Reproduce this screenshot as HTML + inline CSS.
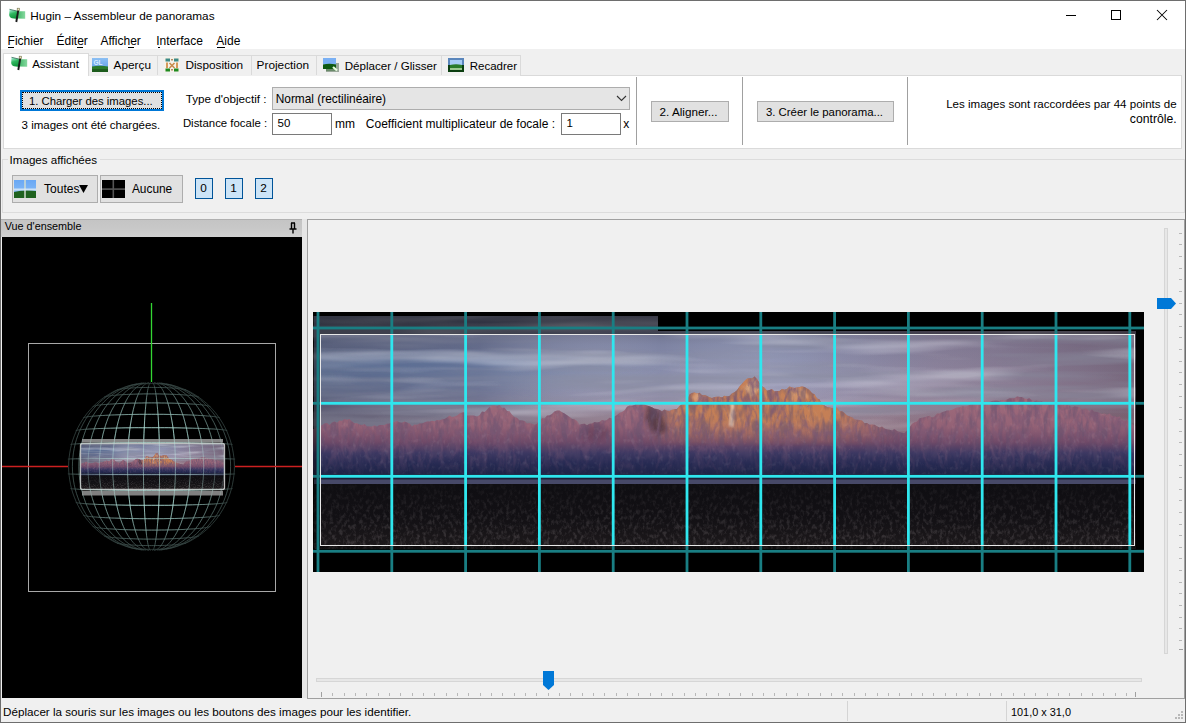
<!DOCTYPE html>
<html><head><meta charset="utf-8">
<style>
*{margin:0;padding:0;box-sizing:border-box}
html,body{width:1186px;height:723px;overflow:hidden;background:#f0f0f0;font-family:"Liberation Sans",sans-serif;font-size:12px;color:#000}
.a{position:absolute}
.t{position:absolute;white-space:nowrap;color:#000}
#win{position:absolute;left:0;top:0;width:1186px;height:723px;background:#f0f0f0;overflow:hidden}
</style></head><body>
<div id="win">
<div class="a" style="left:0px;top:0px;width:1186px;height:49px;background:#fff"></div>
<svg class="a" style="left:8px;top:7px" width="19" height="17" viewBox="0 0 19 17"><defs><linearGradient id="hg" x1="0" y1="0" x2="0.3" y2="1"><stop offset="0" stop-color="#c0f4ec"/><stop offset="0.5" stop-color="#30b860"/><stop offset="1" stop-color="#10943c"/></linearGradient><linearGradient id="hg2" x1="0" y1="0" x2="1" y2="0"><stop offset="0" stop-color="#40b868"/><stop offset="1" stop-color="#88d8a0"/></linearGradient></defs><path d="M9.5 4.3L17.2 4.3V11.8L9 11.6Z" fill="url(#hg2)"/><path d="M1.5 2.3L10 4.3L9.5 12L4 11.3Q1 10.3 1.2 7.5Z" fill="url(#hg)"/><path d="M1.5 2.3L10 4.3" stroke="#3a6a58" stroke-width="0.8"/><path d="M10.3 3L8.3 15" stroke="#1a1a1a" stroke-width="1.9"/><rect x="9.2" y="1.2" width="2.4" height="2.4" fill="#f0e8b8" stroke="#707050" stroke-width="0.6"/></svg>
<div class="t" style="left:30.30px;top:10.51px;font-size:11.80px;line-height:11.80px;">Hugin – Assembleur de panoramas</div>
<div class="a" style="left:1066px;top:15px;width:10px;height:1px;background:#000"></div>
<div class="a" style="left:1111px;top:10px;width:10px;height:10px;border:1px solid #000"></div>
<svg class="a" style="left:1156px;top:9px" width="12" height="12" viewBox="0 0 12 12"><path d="M1 1L11 11M11 1L1 11" stroke="#000" stroke-width="1.05"/></svg>
<div class="t" style="left:7.60px;top:34.84px;font-size:12.00px;line-height:12.00px;">Fichier</div>
<div class="a" style="left:8.4px;top:47px;width:6.0px;height:1px;background:#000"></div>
<div class="t" style="left:56.50px;top:34.84px;font-size:12.00px;line-height:12.00px;">Éditer</div>
<div class="a" style="left:76.5px;top:47px;width:6.5px;height:1px;background:#000"></div>
<div class="t" style="left:100.40px;top:34.84px;font-size:12.00px;line-height:12.00px;">Afficher</div>
<div class="a" style="left:127.5px;top:47px;width:6.5px;height:1px;background:#000"></div>
<div class="t" style="left:156.20px;top:34.84px;font-size:12.00px;line-height:12.00px;">Interface</div>
<div class="a" style="left:157.5px;top:47px;width:2.5px;height:1px;background:#000"></div>
<div class="t" style="left:216.30px;top:34.84px;font-size:12.00px;line-height:12.00px;">Aide</div>
<div class="a" style="left:217.1px;top:47px;width:7.5px;height:1px;background:#000"></div>
<div class="a" style="left:3px;top:75px;width:1179px;height:74px;background:#fff;border:1px solid #dadada"></div>
<div class="a" style="left:88px;top:55px;width:433px;height:21px;background:#f0f0f0;border:1px solid #dadada;border-bottom:none"></div>
<div class="a" style="left:157px;top:56px;width:1px;height:19px;background:#dadada"></div>
<div class="a" style="left:251px;top:56px;width:1px;height:19px;background:#dadada"></div>
<div class="a" style="left:316px;top:56px;width:1px;height:19px;background:#dadada"></div>
<div class="a" style="left:441px;top:56px;width:1px;height:19px;background:#dadada"></div>
<div class="a" style="left:3px;top:53px;width:86px;height:23px;background:#fff;border:1px solid #dadada;border-bottom:none"></div>
<div class="t" style="left:32.20px;top:59.07px;font-size:11.50px;line-height:11.50px;">Assistant</div>
<div class="t" style="left:113.60px;top:60.31px;font-size:11.80px;line-height:11.80px;">Aperçu</div>
<div class="t" style="left:185.40px;top:60.31px;font-size:11.80px;line-height:11.80px;">Disposition</div>
<div class="t" style="left:256.60px;top:60.31px;font-size:11.80px;line-height:11.80px;">Projection</div>
<div class="t" style="left:344.70px;top:60.48px;font-size:11.60px;line-height:11.60px;">Déplacer / Glisser</div>
<div class="t" style="left:469.70px;top:60.57px;font-size:11.50px;line-height:11.50px;">Recadrer</div>
<svg class="a" style="left:10px;top:55px" width="19" height="17" viewBox="0 0 19 17"><path d="M9.5 4.3L17.2 4.3V11.8L9 11.6Z" fill="url(#hg2)"/><path d="M1.5 2.3L10 4.3L9.5 12L4 11.3Q1 10.3 1.2 7.5Z" fill="url(#hg)"/><path d="M1.5 2.3L10 4.3" stroke="#3a6a58" stroke-width="0.8"/><path d="M10.3 3L8.3 15" stroke="#1a1a1a" stroke-width="1.9"/><rect x="9.2" y="1.2" width="2.4" height="2.4" fill="#f0e8b8" stroke="#707050" stroke-width="0.6"/></svg>
<svg class="a" style="left:92px;top:58px" width="16" height="14" viewBox="0 0 16 14"><defs><linearGradient id="glsky" x1="0" y1="0" x2="0" y2="1"><stop offset="0" stop-color="#8cc0f4"/><stop offset="1" stop-color="#5a96e0"/></linearGradient></defs><rect x="0" y="0" width="16" height="14" fill="url(#glsky)"/><path d="M0 8.5Q8 7 16 8.5V14H0Z" fill="#2a7a2a"/><rect x="0" y="11" width="16" height="3" fill="#1d5c1d"/><text x="1.5" y="6.5" font-family="Liberation Sans" font-size="6.5" font-weight="bold" fill="#d8ecff">GL</text></svg>
<svg class="a" style="left:164px;top:57px" width="16" height="15" viewBox="0 0 16 15"><rect x="0" y="0" width="16" height="15" fill="#f6f2ea"/><rect x="1.5" y="1.5" width="4.5" height="3" fill="#3c8a86"/><rect x="10" y="1.5" width="4.5" height="3" fill="#3c8a86"/><rect x="1.5" y="11.5" width="4.5" height="3" fill="#1e8a1e"/><rect x="10" y="11.5" width="4.5" height="3" fill="#1e8a1e"/><rect x="2" y="5.5" width="2" height="5.5" fill="#d49a5a"/><rect x="12" y="5.5" width="2" height="5.5" fill="#d49a5a"/><path d="M5.5 6L10.5 11M10.5 6L5.5 11" stroke="#c88a4a" stroke-width="1.6"/><rect x="7" y="2" width="2" height="1.5" fill="#b08a60"/><rect x="7" y="12" width="2" height="1.5" fill="#b08a60"/></svg>
<svg class="a" style="left:323px;top:58px" width="17" height="15" viewBox="0 0 17 15"><rect x="3" y="5" width="13" height="9" fill="#9aa89a"/><rect x="0" y="0" width="13" height="6.5" fill="#7ab0f4"/><path d="M0 6.5Q6 5 13 6.5V11H0Z" fill="#0e5a12"/><rect x="3" y="11" width="10" height="2" fill="#6a8a6a"/><path d="M10 9L14 12.5" stroke="#e8ffe0" stroke-width="2.2"/></svg>
<svg class="a" style="left:448px;top:58px" width="16" height="14" viewBox="0 0 16 14"><rect x="0" y="0" width="16" height="7" fill="#5a86bc"/><rect x="0" y="7" width="16" height="7" fill="#0b3e10"/><rect x="2" y="2" width="12" height="5" fill="#a8ccf6"/><path d="M2 7Q8 5.5 14 7V10H2Z" fill="#2a7a2a"/><rect x="2" y="10" width="12" height="2" fill="#9cc890"/></svg>
<div class="a" style="left:20px;top:90px;width:144px;height:21px;background:#e1e1e1;border:2px solid #0078d7"></div>
<div class="a" style="left:22px;top:92px;width:140px;height:17px;border:1px dotted #000"></div>
<div class="t" style="left:29.00px;top:95.63px;font-size:11.30px;line-height:11.30px;">1. Charger des images...</div>
<div class="t" style="left:21.60px;top:119.77px;font-size:11.50px;line-height:11.50px;">3 images ont été chargées.</div>
<div class="t" style="left:185.70px;top:93.10px;font-size:11.70px;line-height:11.70px;">Type d'objectif :</div>
<div class="a" style="left:272px;top:87px;width:358px;height:23px;background:#e5e5e5;border:1px solid #adadad"></div>
<div class="t" style="left:275.70px;top:93.93px;font-size:11.90px;line-height:11.90px;">Normal (rectilinéaire)</div>
<svg class="a" style="left:616px;top:95px" width="11" height="7" viewBox="0 0 11 7"><path d="M1 1L5.5 5.5L10 1" stroke="#333" stroke-width="1.1" fill="none"/></svg>
<div class="t" style="left:182.90px;top:118.35px;font-size:11.40px;line-height:11.40px;">Distance focale :</div>
<div class="a" style="left:272px;top:113px;width:60px;height:22px;background:#fff;border:1px solid #7a7a7a"></div>
<div class="t" style="left:277.50px;top:118.27px;font-size:11.50px;line-height:11.50px;">50</div>
<div class="t" style="left:335.00px;top:117.84px;font-size:12.00px;line-height:12.00px;">mm</div>
<div class="t" style="left:365.80px;top:117.84px;font-size:12.00px;line-height:12.00px;">Coefficient multiplicateur de focale :</div>
<div class="a" style="left:561px;top:113px;width:60px;height:22px;background:#fff;border:1px solid #7a7a7a"></div>
<div class="t" style="left:566.40px;top:118.27px;font-size:11.50px;line-height:11.50px;">1</div>
<div class="t" style="left:623.20px;top:117.84px;font-size:12.00px;line-height:12.00px;">x</div>
<div class="a" style="left:636px;top:77px;width:1px;height:68px;background:#a0a0a0"></div>
<div class="a" style="left:742px;top:77px;width:1px;height:68px;background:#a0a0a0"></div>
<div class="a" style="left:907px;top:77px;width:1px;height:68px;background:#a0a0a0"></div>
<div class="a" style="left:651px;top:101px;width:78px;height:21px;background:#e1e1e1;border:1px solid #adadad"></div>
<div class="t" style="left:659.60px;top:106.40px;font-size:11.70px;line-height:11.70px;">2. Aligner...</div>
<div class="a" style="left:757px;top:101px;width:137px;height:21px;background:#e1e1e1;border:1px solid #adadad"></div>
<div class="t" style="left:765.90px;top:106.65px;font-size:11.40px;line-height:11.40px;">3. Créer le panorama...</div>
<div class="t" style="left:776.60px;top:98.62px;width:400.00px;text-align:right;font-size:11.55px;line-height:11.55px;">Les images sont raccordées par 44 points de</div>
<div class="t" style="left:776.60px;top:112.67px;width:400.00px;text-align:right;font-size:12.20px;line-height:12.20px;">contrôle.</div>
<div class="a" style="left:2px;top:159px;width:1183px;height:54px;border:1px solid #dcdcdc"></div>
<div class="a" style="left:8px;top:152px;width:92px;height:13px;background:#f0f0f0"></div>
<div class="t" style="left:9.60px;top:154.18px;font-size:11.60px;line-height:11.60px;">Images affichées</div>
<div class="a" style="left:12px;top:175px;width:86px;height:28px;background:#e1e1e1;border:1px solid #adadad"></div>
<svg class="a" style="left:14px;top:180px" width="22" height="18" viewBox="0 0 22 18"><defs><linearGradient id="tsky" x1="0" y1="0" x2="0" y2="1"><stop offset="0" stop-color="#6aa8f4"/><stop offset="1" stop-color="#8cc0f8"/></linearGradient></defs><rect width="22" height="18" fill="url(#tsky)"/><path d="M0 12Q11 9 22 11V18H0Z" fill="#1f621f"/><rect x="10" y="0" width="2" height="18" fill="#d0dcd0" opacity="0.75"/><rect x="0" y="8.5" width="22" height="2" fill="#e0ecf8" opacity="0.8"/></svg>
<div class="t" style="left:44.10px;top:182.84px;font-size:12.00px;line-height:12.00px;">Toutes</div>
<svg class="a" style="left:79px;top:184.5px" width="9" height="8" viewBox="0 0 9 8"><path d="M0 0H9L4.5 8Z" fill="#000"/></svg>
<div class="a" style="left:100px;top:175px;width:83px;height:28px;background:#e1e1e1;border:1px solid #adadad"></div>
<svg class="a" style="left:102px;top:180px" width="23" height="18" viewBox="0 0 23 18"><rect width="23" height="18" fill="#000"/><rect x="10.5" y="0" width="1.6" height="18" fill="#555"/><rect x="0" y="8.3" width="23" height="1.6" fill="#555"/></svg>
<div class="t" style="left:131.90px;top:183.53px;font-size:11.90px;line-height:11.90px;">Aucune</div>
<div class="a" style="left:195px;top:178px;width:18px;height:21px;background:#cce4f7;border:1px solid #005499"></div>
<div class="t" style="left:200.20px;top:183.01px;font-size:11.80px;line-height:11.80px;">0</div>
<div class="a" style="left:225px;top:178px;width:18px;height:21px;background:#cce4f7;border:1px solid #005499"></div>
<div class="t" style="left:230.20px;top:183.01px;font-size:11.80px;line-height:11.80px;">1</div>
<div class="a" style="left:255px;top:178px;width:18px;height:21px;background:#cce4f7;border:1px solid #005499"></div>
<div class="t" style="left:260.20px;top:183.01px;font-size:11.80px;line-height:11.80px;">2</div>
<div class="a" style="left:1px;top:219px;width:301px;height:18px;background:linear-gradient(#c4c4c4,#c8c8c8 50%,#d0d0d0);border-top:1px solid #b0b0b0"></div>
<div class="t" style="left:4.80px;top:221.46px;font-size:10.80px;line-height:10.80px;">Vue d'ensemble</div>
<svg class="a" style="left:288px;top:222px" width="10" height="12" viewBox="0 0 10 12"><path d="M3 1H7M3.5 1V7M6.5 1V7M1.5 7H8.5M5 7V11.5" stroke="#000" stroke-width="1.4" fill="none"/></svg>
<div class="a" style="left:2px;top:237px;width:300px;height:461px;background:#000"></div>
<svg class="a" style="left:2px;top:237px" width="301" height="461" viewBox="2 237 301 461"><defs><radialGradient id="sfade" cx="151.5" cy="466.5" r="85" gradientUnits="userSpaceOnUse"><stop offset="0" stop-color="#fff"/><stop offset="0.5" stop-color="#d8d8d8"/><stop offset="0.8" stop-color="#777"/><stop offset="1" stop-color="#2a2a2a"/></radialGradient><mask id="smask"><rect x="2" y="237" width="301" height="461" fill="url(#sfade)"/></mask></defs><rect x="28.5" y="343.5" width="247" height="248" fill="none" stroke="#a8a8a8" stroke-width="1"/><line x1="151.5" y1="303" x2="151.5" y2="382" stroke="#33d633" stroke-width="1.3"/><line x1="2" y1="466.5" x2="68" y2="466.5" stroke="#cc2020" stroke-width="1.3"/><line x1="235" y1="466.5" x2="303" y2="466.5" stroke="#cc2020" stroke-width="1.3"/><g mask="url(#smask)" stroke="#a6dcd2" stroke-width="0.9" stroke-opacity="0.85"><polyline points="131.5,548.1 132.0,548.2 132.5,548.3 133.1,548.4 133.7,548.5 134.4,548.6 135.1,548.7 135.9,548.7 136.7,548.8 137.6,548.9 138.5,549.0 139.5,549.0 140.4,549.1 141.4,549.1 142.5,549.2 143.6,549.2 144.6,549.3 145.8,549.3 146.9,549.3 148.0,549.3 149.2,549.4 150.3,549.4 151.5,549.4 152.7,549.4 153.8,549.4 155.0,549.3 156.1,549.3 157.2,549.3 158.4,549.3 159.4,549.2 160.5,549.2 161.6,549.1 162.6,549.1 163.5,549.0 164.5,549.0 165.4,548.9 166.3,548.8 167.1,548.7 167.9,548.7 168.6,548.6 169.3,548.5 169.9,548.4 170.5,548.3 171.0,548.2 171.5,548.1" fill="none"/><polyline points="117.0,543.1 117.5,543.3 118.0,543.4 118.7,543.6 119.4,543.7 120.2,543.9 121.2,544.0 122.2,544.2 123.3,544.3 124.5,544.5 125.8,544.6 127.1,544.7 128.5,544.8 130.0,544.9 131.6,545.0 133.2,545.1 134.8,545.2 136.6,545.3 138.3,545.4 140.1,545.4 142.0,545.5 143.8,545.5 145.7,545.5 147.6,545.6 149.6,545.6 151.5,545.6 153.4,545.6 155.4,545.6 157.3,545.5 159.2,545.5 161.0,545.5 162.9,545.4 164.7,545.4 166.4,545.3 168.2,545.2 169.8,545.1 171.4,545.0 173.0,544.9 174.5,544.8 175.9,544.7 177.2,544.6 178.5,544.5 179.7,544.3 180.8,544.2 181.8,544.0 182.8,543.9 183.6,543.7 184.3,543.6 185.0,543.4 185.5,543.3 186.0,543.1" fill="none"/><polyline points="104.0,535.8 104.5,536.0 105.1,536.2 105.8,536.4 106.7,536.6 107.6,536.8 108.8,537.0 110.0,537.2 111.4,537.4 112.8,537.5 114.5,537.7 116.2,537.9 118.0,538.0 119.9,538.2 122.0,538.3 124.1,538.4 126.3,538.5 128.6,538.7 130.9,538.7 133.3,538.8 135.8,538.9 138.4,539.0 140.9,539.0 143.6,539.1 146.2,539.1 148.8,539.1 151.5,539.1 154.2,539.1 156.8,539.1 159.4,539.1 162.1,539.0 164.6,539.0 167.2,538.9 169.7,538.8 172.1,538.7 174.4,538.7 176.7,538.5 178.9,538.4 181.0,538.3 183.1,538.2 185.0,538.0 186.8,537.9 188.5,537.7 190.2,537.5 191.6,537.4 193.0,537.2 194.2,537.0 195.4,536.8 196.3,536.6 197.2,536.4 197.9,536.2 198.5,536.0 199.0,535.8" fill="none"/><polyline points="92.5,526.3 92.8,526.5 93.4,526.7 94.0,526.9 94.9,527.1 95.9,527.3 97.1,527.6 98.4,527.8 99.9,528.0 101.6,528.2 103.4,528.4 105.4,528.5 107.5,528.7 109.8,528.9 112.1,529.0 114.7,529.2 117.3,529.3 120.0,529.5 122.9,529.6 125.8,529.7 128.8,529.8 131.9,529.9 135.1,529.9 138.3,530.0 141.6,530.0 144.9,530.1 148.2,530.1 151.5,530.1 154.8,530.1 158.1,530.1 161.4,530.0 164.7,530.0 167.9,529.9 171.1,529.9 174.2,529.8 177.2,529.7 180.1,529.6 183.0,529.5 185.7,529.3 188.3,529.2 190.9,529.0 193.2,528.9 195.5,528.7 197.6,528.5 199.6,528.4 201.4,528.2 203.1,528.0 204.6,527.8 205.9,527.6 207.1,527.3 208.1,527.1 209.0,526.9 209.6,526.7 210.2,526.5 210.5,526.3" fill="none"/><polyline points="83.0,515.1 83.4,515.3 83.9,515.5 84.7,515.7 85.7,515.9 86.8,516.1 88.1,516.3 89.7,516.5 91.4,516.7 93.3,516.9 95.4,517.0 97.7,517.2 100.1,517.4 102.7,517.5 105.5,517.7 108.4,517.8 111.5,518.0 114.7,518.1 118.0,518.2 121.4,518.3 124.9,518.4 128.6,518.5 132.3,518.6 136.0,518.6 139.8,518.7 143.7,518.7 147.6,518.7 151.5,518.7 155.4,518.7 159.3,518.7 163.2,518.7 167.0,518.6 170.7,518.6 174.4,518.5 178.1,518.4 181.6,518.3 185.0,518.2 188.3,518.1 191.5,518.0 194.6,517.8 197.5,517.7 200.3,517.5 202.9,517.4 205.3,517.2 207.6,517.0 209.7,516.9 211.6,516.7 213.3,516.5 214.9,516.3 216.2,516.1 217.3,515.9 218.3,515.7 219.1,515.5 219.6,515.3 220.0,515.1" fill="none"/><polyline points="75.6,502.3 76.0,502.5 76.6,502.7 77.4,502.8 78.4,503.0 79.7,503.2 81.1,503.3 82.8,503.5 84.7,503.7 86.8,503.8 89.1,504.0 91.6,504.1 94.3,504.2 97.2,504.4 100.2,504.5 103.5,504.6 106.9,504.7 110.4,504.8 114.1,504.9 117.9,505.0 121.8,505.1 125.9,505.2 130.0,505.2 134.2,505.3 138.5,505.3 142.8,505.3 147.1,505.3 151.5,505.3 155.9,505.3 160.2,505.3 164.5,505.3 168.8,505.3 173.0,505.2 177.1,505.2 181.2,505.1 185.1,505.0 188.9,504.9 192.6,504.8 196.1,504.7 199.5,504.6 202.8,504.5 205.8,504.4 208.7,504.2 211.4,504.1 213.9,504.0 216.2,503.8 218.3,503.7 220.2,503.5 221.9,503.3 223.3,503.2 224.6,503.0 225.6,502.8 226.4,502.7 227.0,502.5 227.4,502.3" fill="none"/><polyline points="70.4,488.4 70.5,488.5 70.9,488.6 71.5,488.7 72.4,488.8 73.4,488.9 74.7,489.0 76.3,489.1 78.0,489.2 80.0,489.3 82.3,489.4 84.7,489.5 87.4,489.6 90.2,489.7 93.3,489.8 96.6,489.9 100.0,490.0 103.7,490.0 107.4,490.1 111.4,490.2 115.5,490.2 119.7,490.3 124.0,490.3 128.5,490.4 133.0,490.4 137.5,490.4 142.2,490.4 146.8,490.4 151.5,490.4 156.2,490.4 160.8,490.4 165.5,490.4 170.0,490.4 174.5,490.4 179.0,490.3 183.3,490.3 187.5,490.2 191.6,490.2 195.6,490.1 199.3,490.0 203.0,490.0 206.4,489.9 209.7,489.8 212.8,489.7 215.6,489.6 218.3,489.5 220.7,489.4 223.0,489.3 225.0,489.2 226.7,489.1 228.3,489.0 229.6,488.9 230.6,488.8 231.5,488.7 232.1,488.6 232.5,488.5 232.6,488.4" fill="none"/><polyline points="67.8,473.9 68.0,473.9 68.3,473.9 68.9,474.0 69.8,474.0 70.9,474.1 72.2,474.1 73.8,474.1 75.6,474.2 77.7,474.2 80.0,474.2 82.5,474.3 85.2,474.3 88.2,474.3 91.3,474.4 94.7,474.4 98.3,474.4 102.0,474.4 105.9,474.5 110.0,474.5 114.2,474.5 118.6,474.5 123.1,474.5 127.7,474.6 132.3,474.6 137.1,474.6 141.8,474.6 146.7,474.6 151.5,474.6 156.3,474.6 161.2,474.6 165.9,474.6 170.7,474.6 175.3,474.6 179.9,474.5 184.4,474.5 188.8,474.5 193.0,474.5 197.1,474.5 201.0,474.4 204.7,474.4 208.3,474.4 211.7,474.4 214.8,474.3 217.8,474.3 220.5,474.3 223.0,474.2 225.3,474.2 227.4,474.2 229.2,474.1 230.8,474.1 232.1,474.1 233.2,474.0 234.1,474.0 234.7,473.9 235.0,473.9 235.2,473.9" fill="none"/><polyline points="67.8,459.1 68.0,459.1 68.3,459.1 68.9,459.0 69.8,459.0 70.9,458.9 72.2,458.9 73.8,458.9 75.6,458.8 77.7,458.8 80.0,458.8 82.5,458.7 85.2,458.7 88.2,458.7 91.3,458.6 94.7,458.6 98.3,458.6 102.0,458.6 105.9,458.5 110.0,458.5 114.2,458.5 118.6,458.5 123.1,458.5 127.7,458.4 132.3,458.4 137.1,458.4 141.8,458.4 146.7,458.4 151.5,458.4 156.3,458.4 161.2,458.4 165.9,458.4 170.7,458.4 175.3,458.4 179.9,458.5 184.4,458.5 188.8,458.5 193.0,458.5 197.1,458.5 201.0,458.6 204.7,458.6 208.3,458.6 211.7,458.6 214.8,458.7 217.8,458.7 220.5,458.7 223.0,458.8 225.3,458.8 227.4,458.8 229.2,458.9 230.8,458.9 232.1,458.9 233.2,459.0 234.1,459.0 234.7,459.1 235.0,459.1 235.2,459.1" fill="none"/><polyline points="70.4,444.6 70.5,444.5 70.9,444.4 71.5,444.3 72.4,444.2 73.4,444.1 74.7,444.0 76.3,443.9 78.0,443.8 80.0,443.7 82.3,443.6 84.7,443.5 87.4,443.4 90.2,443.3 93.3,443.2 96.6,443.1 100.0,443.0 103.7,443.0 107.4,442.9 111.4,442.8 115.5,442.8 119.7,442.7 124.0,442.7 128.5,442.6 133.0,442.6 137.5,442.6 142.2,442.6 146.8,442.6 151.5,442.6 156.2,442.6 160.8,442.6 165.5,442.6 170.0,442.6 174.5,442.6 179.0,442.7 183.3,442.7 187.5,442.8 191.6,442.8 195.6,442.9 199.3,443.0 203.0,443.0 206.4,443.1 209.7,443.2 212.8,443.3 215.6,443.4 218.3,443.5 220.7,443.6 223.0,443.7 225.0,443.8 226.7,443.9 228.3,444.0 229.6,444.1 230.6,444.2 231.5,444.3 232.1,444.4 232.5,444.5 232.6,444.6" fill="none"/><polyline points="75.6,430.7 76.0,430.5 76.6,430.3 77.4,430.2 78.4,430.0 79.7,429.8 81.1,429.7 82.8,429.5 84.7,429.3 86.8,429.2 89.1,429.0 91.6,428.9 94.3,428.8 97.2,428.6 100.2,428.5 103.5,428.4 106.9,428.3 110.4,428.2 114.1,428.1 117.9,428.0 121.8,427.9 125.9,427.8 130.0,427.8 134.2,427.7 138.5,427.7 142.8,427.7 147.1,427.7 151.5,427.7 155.9,427.7 160.2,427.7 164.5,427.7 168.8,427.7 173.0,427.8 177.1,427.8 181.2,427.9 185.1,428.0 188.9,428.1 192.6,428.2 196.1,428.3 199.5,428.4 202.8,428.5 205.8,428.6 208.7,428.8 211.4,428.9 213.9,429.0 216.2,429.2 218.3,429.3 220.2,429.5 221.9,429.7 223.3,429.8 224.6,430.0 225.6,430.2 226.4,430.3 227.0,430.5 227.4,430.7" fill="none"/><polyline points="83.0,417.9 83.4,417.7 83.9,417.5 84.7,417.3 85.7,417.1 86.8,416.9 88.1,416.7 89.7,416.5 91.4,416.3 93.3,416.1 95.4,416.0 97.7,415.8 100.1,415.6 102.7,415.5 105.5,415.3 108.4,415.2 111.5,415.0 114.7,414.9 118.0,414.8 121.4,414.7 124.9,414.6 128.6,414.5 132.3,414.4 136.0,414.4 139.8,414.3 143.7,414.3 147.6,414.3 151.5,414.3 155.4,414.3 159.3,414.3 163.2,414.3 167.0,414.4 170.7,414.4 174.4,414.5 178.1,414.6 181.6,414.7 185.0,414.8 188.3,414.9 191.5,415.0 194.6,415.2 197.5,415.3 200.3,415.5 202.9,415.6 205.3,415.8 207.6,416.0 209.7,416.1 211.6,416.3 213.3,416.5 214.9,416.7 216.2,416.9 217.3,417.1 218.3,417.3 219.1,417.5 219.6,417.7 220.0,417.9" fill="none"/><polyline points="92.5,406.7 92.8,406.5 93.4,406.3 94.0,406.1 94.9,405.9 95.9,405.7 97.1,405.4 98.4,405.2 99.9,405.0 101.6,404.8 103.4,404.6 105.4,404.5 107.5,404.3 109.8,404.1 112.1,404.0 114.7,403.8 117.3,403.7 120.0,403.5 122.9,403.4 125.8,403.3 128.8,403.2 131.9,403.1 135.1,403.1 138.3,403.0 141.6,403.0 144.9,402.9 148.2,402.9 151.5,402.9 154.8,402.9 158.1,402.9 161.4,403.0 164.7,403.0 167.9,403.1 171.1,403.1 174.2,403.2 177.2,403.3 180.1,403.4 183.0,403.5 185.7,403.7 188.3,403.8 190.9,404.0 193.2,404.1 195.5,404.3 197.6,404.5 199.6,404.6 201.4,404.8 203.1,405.0 204.6,405.2 205.9,405.4 207.1,405.7 208.1,405.9 209.0,406.1 209.6,406.3 210.2,406.5 210.5,406.7" fill="none"/><polyline points="104.0,397.2 104.5,397.0 105.1,396.8 105.8,396.6 106.7,396.4 107.6,396.2 108.8,396.0 110.0,395.8 111.4,395.6 112.8,395.5 114.5,395.3 116.2,395.1 118.0,395.0 119.9,394.8 122.0,394.7 124.1,394.6 126.3,394.5 128.6,394.3 130.9,394.3 133.3,394.2 135.8,394.1 138.4,394.0 140.9,394.0 143.6,393.9 146.2,393.9 148.8,393.9 151.5,393.9 154.2,393.9 156.8,393.9 159.4,393.9 162.1,394.0 164.6,394.0 167.2,394.1 169.7,394.2 172.1,394.3 174.4,394.3 176.7,394.5 178.9,394.6 181.0,394.7 183.1,394.8 185.0,395.0 186.8,395.1 188.5,395.3 190.2,395.5 191.6,395.6 193.0,395.8 194.2,396.0 195.4,396.2 196.3,396.4 197.2,396.6 197.9,396.8 198.5,397.0 199.0,397.2" fill="none"/><polyline points="117.0,389.9 117.5,389.7 118.0,389.6 118.7,389.4 119.4,389.3 120.2,389.1 121.2,389.0 122.2,388.8 123.3,388.7 124.5,388.5 125.8,388.4 127.1,388.3 128.5,388.2 130.0,388.1 131.6,388.0 133.2,387.9 134.8,387.8 136.6,387.7 138.3,387.6 140.1,387.6 142.0,387.5 143.8,387.5 145.7,387.5 147.6,387.4 149.6,387.4 151.5,387.4 153.4,387.4 155.4,387.4 157.3,387.5 159.2,387.5 161.0,387.5 162.9,387.6 164.7,387.6 166.4,387.7 168.2,387.8 169.8,387.9 171.4,388.0 173.0,388.1 174.5,388.2 175.9,388.3 177.2,388.4 178.5,388.5 179.7,388.7 180.8,388.8 181.8,389.0 182.8,389.1 183.6,389.3 184.3,389.4 185.0,389.6 185.5,389.7 186.0,389.9" fill="none"/><polyline points="131.5,384.9 132.0,384.8 132.5,384.7 133.1,384.6 133.7,384.5 134.4,384.4 135.1,384.3 135.9,384.3 136.7,384.2 137.6,384.1 138.5,384.0 139.5,384.0 140.4,383.9 141.4,383.9 142.5,383.8 143.6,383.8 144.6,383.7 145.8,383.7 146.9,383.7 148.0,383.7 149.2,383.6 150.3,383.6 151.5,383.6 152.7,383.6 153.8,383.6 155.0,383.7 156.1,383.7 157.2,383.7 158.4,383.7 159.4,383.8 160.5,383.8 161.6,383.9 162.6,383.9 163.5,384.0 164.5,384.0 165.4,384.1 166.3,384.2 167.1,384.3 167.9,384.3 168.6,384.4 169.3,384.5 169.9,384.6 170.5,384.7 171.0,384.8 171.5,384.9" fill="none"/><polyline points="118.3,543.7 114.4,541.9 110.6,539.8 106.9,537.6 103.3,535.2 99.9,532.5 96.5,529.7 93.4,526.7 90.3,523.5 87.5,520.2 84.8,516.7 82.3,513.0 80.0,509.2 77.9,505.3 76.0,501.3 74.3,497.2 72.8,493.0 71.5,488.7 70.5,484.3 69.7,479.9 69.1,475.5 68.7,471.0 68.6,466.5 68.7,462.0 69.1,457.5 69.7,453.1 70.5,448.7 71.5,444.3 72.8,440.0 74.3,435.8 76.0,431.7 77.9,427.7 80.0,423.8 82.3,420.0 84.8,416.3 87.5,412.8 90.3,409.5 93.4,406.3 96.5,403.3 99.9,400.5 103.3,397.8 106.9,395.4 110.6,393.2 114.4,391.1 118.3,389.3" fill="none"/><polyline points="131.7,548.1 127.8,547.0 123.9,545.7 120.2,544.2 116.4,542.4 112.8,540.4 109.3,538.2 105.8,535.8 102.5,533.2 99.3,530.4 96.3,527.4 93.4,524.2 90.6,520.9 88.0,517.4 85.6,513.7 83.4,509.9 81.4,505.9 79.5,501.9 77.9,497.7 76.4,493.4 75.2,489.1 74.2,484.6 73.4,480.1 72.9,475.6 72.5,471.1 72.4,466.5 72.5,461.9 72.9,457.4 73.4,452.9 74.2,448.4 75.2,443.9 76.4,439.6 77.9,435.3 79.5,431.1 81.4,427.1 83.4,423.1 85.6,419.3 88.0,415.6 90.6,412.1 93.4,408.8 96.3,405.6 99.3,402.6 102.5,399.8 105.8,397.2 109.3,394.8 112.8,392.6 116.4,390.6 120.2,388.8 123.9,387.3 127.8,386.0 131.7,384.9" fill="none"/><polyline points="137.1,549.2 133.5,548.4 130.0,547.4 126.4,546.2 123.0,544.7 119.6,543.0 116.3,541.0 113.0,538.9 109.9,536.5 106.8,533.9 103.9,531.1 101.0,528.1 98.4,524.9 95.8,521.6 93.4,518.0 91.2,514.3 89.1,510.5 87.2,506.5 85.5,502.4 84.0,498.1 82.6,493.8 81.5,489.4 80.6,484.9 79.8,480.4 79.3,475.8 79.0,471.1 78.9,466.5 79.0,461.9 79.3,457.2 79.8,452.6 80.6,448.1 81.5,443.6 82.6,439.2 84.0,434.9 85.5,430.6 87.2,426.5 89.1,422.5 91.2,418.7 93.4,415.0 95.8,411.4 98.4,408.1 101.0,404.9 103.9,401.9 106.8,399.1 109.9,396.5 113.0,394.1 116.3,392.0 119.6,390.0 123.0,388.3 126.4,386.8 130.0,385.6 133.5,384.6 137.1,383.8" fill="none"/><polyline points="142.2,550.0 139.0,549.5 135.9,548.7 132.8,547.8 129.8,546.6 126.8,545.1 123.8,543.4 120.9,541.5 118.0,539.4 115.3,537.0 112.6,534.5 110.0,531.7 107.5,528.7 105.1,525.5 102.9,522.2 100.8,518.6 98.8,514.9 97.0,511.0 95.3,507.0 93.8,502.8 92.4,498.6 91.2,494.2 90.2,489.7 89.4,485.2 88.7,480.6 88.3,475.9 88.0,471.2 87.9,466.5 88.0,461.8 88.3,457.1 88.7,452.4 89.4,447.8 90.2,443.3 91.2,438.8 92.4,434.4 93.8,430.2 95.3,426.0 97.0,422.0 98.8,418.1 100.8,414.4 102.9,410.8 105.1,407.5 107.5,404.3 110.0,401.3 112.6,398.5 115.3,396.0 118.0,393.6 120.9,391.5 123.8,389.6 126.8,387.9 129.8,386.4 132.8,385.2 135.9,384.3 139.0,383.5 142.2,383.0" fill="none"/><polyline points="143.9,550.1 141.4,549.7 138.8,549.0 136.3,548.1 133.8,546.9 131.3,545.5 128.9,543.8 126.5,542.0 124.2,539.9 121.9,537.5 119.7,535.0 117.6,532.2 115.5,529.2 113.6,526.1 111.7,522.7 110.0,519.1 108.3,515.4 106.8,511.5 105.4,507.4 104.2,503.2 103.0,498.9 102.1,494.5 101.2,490.0 100.5,485.4 100.0,480.7 99.6,476.0 99.4,471.3 99.3,466.5 99.4,461.7 99.6,457.0 100.0,452.3 100.5,447.6 101.2,443.0 102.1,438.5 103.0,434.1 104.2,429.8 105.4,425.6 106.8,421.5 108.3,417.6 110.0,413.9 111.7,410.3 113.6,406.9 115.5,403.8 117.6,400.8 119.7,398.0 121.9,395.5 124.2,393.1 126.5,391.0 128.9,389.2 131.3,387.5 133.8,386.1 136.3,384.9 138.8,384.0 141.4,383.3 143.9,382.9" fill="none"/><polyline points="145.9,550.2 144.0,549.8 142.1,549.2 140.3,548.3 138.4,547.1 136.6,545.8 134.8,544.2 133.0,542.3 131.3,540.2 129.6,537.9 127.9,535.4 126.3,532.6 124.8,529.6 123.4,526.5 122.0,523.1 120.7,519.5 119.4,515.8 118.3,511.8 117.3,507.8 116.3,503.6 115.5,499.2 114.7,494.8 114.1,490.2 113.6,485.6 113.2,480.9 112.9,476.1 112.7,471.3 112.7,466.5 112.7,461.7 112.9,456.9 113.2,452.1 113.6,447.4 114.1,442.8 114.7,438.2 115.5,433.8 116.3,429.4 117.3,425.2 118.3,421.2 119.4,417.2 120.7,413.5 122.0,409.9 123.4,406.5 124.8,403.4 126.3,400.4 127.9,397.6 129.6,395.1 131.3,392.8 133.0,390.7 134.8,388.8 136.6,387.2 138.4,385.9 140.3,384.7 142.1,383.8 144.0,383.2 145.9,382.8" fill="none"/><polyline points="149.2,550.5 148.1,550.3 146.9,549.9 145.8,549.3 144.6,548.4 143.5,547.3 142.3,546.0 141.2,544.4 140.1,542.6 139.1,540.5 138.0,538.2 137.0,535.7 136.0,532.9 135.1,529.9 134.2,526.8 133.3,523.4 132.5,519.8 131.8,516.0 131.1,512.1 130.4,508.0 129.8,503.8 129.3,499.4 128.8,494.9 128.5,490.4 128.1,485.7 127.9,481.0 127.7,476.2 127.6,471.3 127.6,466.5 127.6,461.7 127.7,456.8 127.9,452.0 128.1,447.3 128.5,442.6 128.8,438.1 129.3,433.6 129.8,429.2 130.4,425.0 131.1,420.9 131.8,417.0 132.5,413.2 133.3,409.6 134.2,406.2 135.1,403.1 136.0,400.1 137.0,397.3 138.0,394.8 139.1,392.5 140.1,390.4 141.2,388.6 142.3,387.0 143.5,385.7 144.6,384.6 145.8,383.7 146.9,383.1 148.1,382.7 149.2,382.5" fill="none"/><polyline points="150.7,550.5 150.3,550.4 150.0,550.0 149.6,549.4 149.2,548.5 148.8,547.4 148.4,546.1 148.0,544.5 147.7,542.7 147.3,540.6 147.0,538.3 146.6,535.8 146.3,533.0 146.0,530.1 145.7,526.9 145.4,523.5 145.1,519.9 144.8,516.2 144.6,512.2 144.4,508.1 144.2,503.9 144.0,499.5 143.8,495.0 143.7,490.4 143.6,485.8 143.5,481.0 143.5,476.2 143.4,471.4 143.4,466.5 143.4,461.6 143.5,456.8 143.5,452.0 143.6,447.2 143.7,442.6 143.8,438.0 144.0,433.5 144.2,429.1 144.4,424.9 144.6,420.8 144.8,416.8 145.1,413.1 145.4,409.5 145.7,406.1 146.0,402.9 146.3,400.0 146.6,397.2 147.0,394.7 147.3,392.4 147.7,390.3 148.0,388.5 148.4,386.9 148.8,385.6 149.2,384.5 149.6,383.6 150.0,383.0 150.3,382.6 150.7,382.5" fill="none"/><polyline points="152.3,550.5 152.7,550.4 153.0,550.0 153.4,549.4 153.8,548.5 154.2,547.4 154.6,546.1 155.0,544.5 155.3,542.7 155.7,540.6 156.0,538.3 156.4,535.8 156.7,533.0 157.0,530.1 157.3,526.9 157.6,523.5 157.9,519.9 158.2,516.2 158.4,512.2 158.6,508.1 158.8,503.9 159.0,499.5 159.2,495.0 159.3,490.4 159.4,485.8 159.5,481.0 159.5,476.2 159.6,471.4 159.6,466.5 159.6,461.6 159.5,456.8 159.5,452.0 159.4,447.2 159.3,442.6 159.2,438.0 159.0,433.5 158.8,429.1 158.6,424.9 158.4,420.8 158.2,416.8 157.9,413.1 157.6,409.5 157.3,406.1 157.0,402.9 156.7,400.0 156.4,397.2 156.0,394.7 155.7,392.4 155.3,390.3 155.0,388.5 154.6,386.9 154.2,385.6 153.8,384.5 153.4,383.6 153.0,383.0 152.7,382.6 152.3,382.5" fill="none"/><polyline points="153.8,550.5 154.9,550.3 156.1,549.9 157.2,549.3 158.4,548.4 159.5,547.3 160.7,546.0 161.8,544.4 162.9,542.6 163.9,540.5 165.0,538.2 166.0,535.7 167.0,532.9 167.9,529.9 168.8,526.8 169.7,523.4 170.5,519.8 171.2,516.0 171.9,512.1 172.6,508.0 173.2,503.8 173.7,499.4 174.2,494.9 174.5,490.4 174.9,485.7 175.1,481.0 175.3,476.2 175.4,471.3 175.4,466.5 175.4,461.7 175.3,456.8 175.1,452.0 174.9,447.3 174.5,442.6 174.2,438.1 173.7,433.6 173.2,429.2 172.6,425.0 171.9,420.9 171.2,417.0 170.5,413.2 169.7,409.6 168.8,406.2 167.9,403.1 167.0,400.1 166.0,397.3 165.0,394.8 163.9,392.5 162.9,390.4 161.8,388.6 160.7,387.0 159.5,385.7 158.4,384.6 157.2,383.7 156.1,383.1 154.9,382.7 153.8,382.5" fill="none"/><polyline points="157.1,550.2 159.0,549.8 160.9,549.2 162.7,548.3 164.6,547.1 166.4,545.8 168.2,544.2 170.0,542.3 171.7,540.2 173.4,537.9 175.1,535.4 176.7,532.6 178.2,529.6 179.6,526.5 181.0,523.1 182.3,519.5 183.6,515.8 184.7,511.8 185.7,507.8 186.7,503.6 187.5,499.2 188.3,494.8 188.9,490.2 189.4,485.6 189.8,480.9 190.1,476.1 190.3,471.3 190.3,466.5 190.3,461.7 190.1,456.9 189.8,452.1 189.4,447.4 188.9,442.8 188.3,438.2 187.5,433.8 186.7,429.4 185.7,425.2 184.7,421.2 183.6,417.2 182.3,413.5 181.0,409.9 179.6,406.5 178.2,403.4 176.7,400.4 175.1,397.6 173.4,395.1 171.7,392.8 170.0,390.7 168.2,388.8 166.4,387.2 164.6,385.9 162.7,384.7 160.9,383.8 159.0,383.2 157.1,382.8" fill="none"/><polyline points="159.1,550.1 161.6,549.7 164.2,549.0 166.7,548.1 169.2,546.9 171.7,545.5 174.1,543.8 176.5,542.0 178.8,539.9 181.1,537.5 183.3,535.0 185.4,532.2 187.5,529.2 189.4,526.1 191.3,522.7 193.0,519.1 194.7,515.4 196.2,511.5 197.6,507.4 198.8,503.2 200.0,498.9 200.9,494.5 201.8,490.0 202.5,485.4 203.0,480.7 203.4,476.0 203.6,471.3 203.7,466.5 203.6,461.7 203.4,457.0 203.0,452.3 202.5,447.6 201.8,443.0 200.9,438.5 200.0,434.1 198.8,429.8 197.6,425.6 196.2,421.5 194.7,417.6 193.0,413.9 191.3,410.3 189.4,406.9 187.5,403.8 185.4,400.8 183.3,398.0 181.1,395.5 178.8,393.1 176.5,391.0 174.1,389.2 171.7,387.5 169.2,386.1 166.7,384.9 164.2,384.0 161.6,383.3 159.1,382.9" fill="none"/><polyline points="160.8,550.0 164.0,549.5 167.1,548.7 170.2,547.8 173.2,546.6 176.2,545.1 179.2,543.4 182.1,541.5 185.0,539.4 187.7,537.0 190.4,534.5 193.0,531.7 195.5,528.7 197.9,525.5 200.1,522.2 202.2,518.6 204.2,514.9 206.0,511.0 207.7,507.0 209.2,502.8 210.6,498.6 211.8,494.2 212.8,489.7 213.6,485.2 214.3,480.6 214.7,475.9 215.0,471.2 215.1,466.5 215.0,461.8 214.7,457.1 214.3,452.4 213.6,447.8 212.8,443.3 211.8,438.8 210.6,434.4 209.2,430.2 207.7,426.0 206.0,422.0 204.2,418.1 202.2,414.4 200.1,410.8 197.9,407.5 195.5,404.3 193.0,401.3 190.4,398.5 187.7,396.0 185.0,393.6 182.1,391.5 179.2,389.6 176.2,387.9 173.2,386.4 170.2,385.2 167.1,384.3 164.0,383.5 160.8,383.0" fill="none"/><polyline points="165.9,549.2 169.5,548.4 173.0,547.4 176.6,546.2 180.0,544.7 183.4,543.0 186.7,541.0 190.0,538.9 193.1,536.5 196.2,533.9 199.1,531.1 202.0,528.1 204.6,524.9 207.2,521.6 209.6,518.0 211.8,514.3 213.9,510.5 215.8,506.5 217.5,502.4 219.0,498.1 220.4,493.8 221.5,489.4 222.4,484.9 223.2,480.4 223.7,475.8 224.0,471.1 224.1,466.5 224.0,461.9 223.7,457.2 223.2,452.6 222.4,448.1 221.5,443.6 220.4,439.2 219.0,434.9 217.5,430.6 215.8,426.5 213.9,422.5 211.8,418.7 209.6,415.0 207.2,411.4 204.6,408.1 202.0,404.9 199.1,401.9 196.2,399.1 193.1,396.5 190.0,394.1 186.7,392.0 183.4,390.0 180.0,388.3 176.6,386.8 173.0,385.6 169.5,384.6 165.9,383.8" fill="none"/><polyline points="171.3,548.1 175.2,547.0 179.1,545.7 182.8,544.2 186.6,542.4 190.2,540.4 193.7,538.2 197.2,535.8 200.5,533.2 203.7,530.4 206.7,527.4 209.6,524.2 212.4,520.9 215.0,517.4 217.4,513.7 219.6,509.9 221.6,505.9 223.5,501.9 225.1,497.7 226.6,493.4 227.8,489.1 228.8,484.6 229.6,480.1 230.1,475.6 230.5,471.1 230.6,466.5 230.5,461.9 230.1,457.4 229.6,452.9 228.8,448.4 227.8,443.9 226.6,439.6 225.1,435.3 223.5,431.1 221.6,427.1 219.6,423.1 217.4,419.3 215.0,415.6 212.4,412.1 209.6,408.8 206.7,405.6 203.7,402.6 200.5,399.8 197.2,397.2 193.7,394.8 190.2,392.6 186.6,390.6 182.8,388.8 179.1,387.3 175.2,386.0 171.3,384.9" fill="none"/><polyline points="184.7,543.7 188.6,541.9 192.4,539.8 196.1,537.6 199.7,535.2 203.1,532.5 206.5,529.7 209.6,526.7 212.7,523.5 215.5,520.2 218.2,516.7 220.7,513.0 223.0,509.2 225.1,505.3 227.0,501.3 228.7,497.2 230.2,493.0 231.5,488.7 232.5,484.3 233.3,479.9 233.9,475.5 234.3,471.0 234.4,466.5 234.3,462.0 233.9,457.5 233.3,453.1 232.5,448.7 231.5,444.3 230.2,440.0 228.7,435.8 227.0,431.7 225.1,427.7 223.0,423.8 220.7,420.0 218.2,416.3 215.5,412.8 212.7,409.5 209.6,406.3 206.5,403.3 203.1,400.5 199.7,397.8 196.1,395.4 192.4,393.2 188.6,391.1 184.7,389.3" fill="none"/></g><rect x="82" y="439" width="141" height="3.5" fill="#858585"/><rect x="82" y="491" width="141" height="4.5" fill="#808080"/><svg x="81" y="444" width="143" height="45" viewBox="314 334 826 215" preserveAspectRatio="none"><use href="#photo"/></svg><rect x="80.5" y="443.5" width="144" height="46" rx="2" fill="none" stroke="#bcbcbc" stroke-width="1.3"/><g mask="url(#smask)" stroke="#b8e6de" stroke-width="1" stroke-opacity="0.55"><polyline points="131.5,548.1 132.0,548.2 132.5,548.3 133.1,548.4 133.7,548.5 134.4,548.6 135.1,548.7 135.9,548.7 136.7,548.8 137.6,548.9 138.5,549.0 139.5,549.0 140.4,549.1 141.4,549.1 142.5,549.2 143.6,549.2 144.6,549.3 145.8,549.3 146.9,549.3 148.0,549.3 149.2,549.4 150.3,549.4 151.5,549.4 152.7,549.4 153.8,549.4 155.0,549.3 156.1,549.3 157.2,549.3 158.4,549.3 159.4,549.2 160.5,549.2 161.6,549.1 162.6,549.1 163.5,549.0 164.5,549.0 165.4,548.9 166.3,548.8 167.1,548.7 167.9,548.7 168.6,548.6 169.3,548.5 169.9,548.4 170.5,548.3 171.0,548.2 171.5,548.1" fill="none"/><polyline points="117.0,543.1 117.5,543.3 118.0,543.4 118.7,543.6 119.4,543.7 120.2,543.9 121.2,544.0 122.2,544.2 123.3,544.3 124.5,544.5 125.8,544.6 127.1,544.7 128.5,544.8 130.0,544.9 131.6,545.0 133.2,545.1 134.8,545.2 136.6,545.3 138.3,545.4 140.1,545.4 142.0,545.5 143.8,545.5 145.7,545.5 147.6,545.6 149.6,545.6 151.5,545.6 153.4,545.6 155.4,545.6 157.3,545.5 159.2,545.5 161.0,545.5 162.9,545.4 164.7,545.4 166.4,545.3 168.2,545.2 169.8,545.1 171.4,545.0 173.0,544.9 174.5,544.8 175.9,544.7 177.2,544.6 178.5,544.5 179.7,544.3 180.8,544.2 181.8,544.0 182.8,543.9 183.6,543.7 184.3,543.6 185.0,543.4 185.5,543.3 186.0,543.1" fill="none"/><polyline points="104.0,535.8 104.5,536.0 105.1,536.2 105.8,536.4 106.7,536.6 107.6,536.8 108.8,537.0 110.0,537.2 111.4,537.4 112.8,537.5 114.5,537.7 116.2,537.9 118.0,538.0 119.9,538.2 122.0,538.3 124.1,538.4 126.3,538.5 128.6,538.7 130.9,538.7 133.3,538.8 135.8,538.9 138.4,539.0 140.9,539.0 143.6,539.1 146.2,539.1 148.8,539.1 151.5,539.1 154.2,539.1 156.8,539.1 159.4,539.1 162.1,539.0 164.6,539.0 167.2,538.9 169.7,538.8 172.1,538.7 174.4,538.7 176.7,538.5 178.9,538.4 181.0,538.3 183.1,538.2 185.0,538.0 186.8,537.9 188.5,537.7 190.2,537.5 191.6,537.4 193.0,537.2 194.2,537.0 195.4,536.8 196.3,536.6 197.2,536.4 197.9,536.2 198.5,536.0 199.0,535.8" fill="none"/><polyline points="92.5,526.3 92.8,526.5 93.4,526.7 94.0,526.9 94.9,527.1 95.9,527.3 97.1,527.6 98.4,527.8 99.9,528.0 101.6,528.2 103.4,528.4 105.4,528.5 107.5,528.7 109.8,528.9 112.1,529.0 114.7,529.2 117.3,529.3 120.0,529.5 122.9,529.6 125.8,529.7 128.8,529.8 131.9,529.9 135.1,529.9 138.3,530.0 141.6,530.0 144.9,530.1 148.2,530.1 151.5,530.1 154.8,530.1 158.1,530.1 161.4,530.0 164.7,530.0 167.9,529.9 171.1,529.9 174.2,529.8 177.2,529.7 180.1,529.6 183.0,529.5 185.7,529.3 188.3,529.2 190.9,529.0 193.2,528.9 195.5,528.7 197.6,528.5 199.6,528.4 201.4,528.2 203.1,528.0 204.6,527.8 205.9,527.6 207.1,527.3 208.1,527.1 209.0,526.9 209.6,526.7 210.2,526.5 210.5,526.3" fill="none"/><polyline points="83.0,515.1 83.4,515.3 83.9,515.5 84.7,515.7 85.7,515.9 86.8,516.1 88.1,516.3 89.7,516.5 91.4,516.7 93.3,516.9 95.4,517.0 97.7,517.2 100.1,517.4 102.7,517.5 105.5,517.7 108.4,517.8 111.5,518.0 114.7,518.1 118.0,518.2 121.4,518.3 124.9,518.4 128.6,518.5 132.3,518.6 136.0,518.6 139.8,518.7 143.7,518.7 147.6,518.7 151.5,518.7 155.4,518.7 159.3,518.7 163.2,518.7 167.0,518.6 170.7,518.6 174.4,518.5 178.1,518.4 181.6,518.3 185.0,518.2 188.3,518.1 191.5,518.0 194.6,517.8 197.5,517.7 200.3,517.5 202.9,517.4 205.3,517.2 207.6,517.0 209.7,516.9 211.6,516.7 213.3,516.5 214.9,516.3 216.2,516.1 217.3,515.9 218.3,515.7 219.1,515.5 219.6,515.3 220.0,515.1" fill="none"/><polyline points="75.6,502.3 76.0,502.5 76.6,502.7 77.4,502.8 78.4,503.0 79.7,503.2 81.1,503.3 82.8,503.5 84.7,503.7 86.8,503.8 89.1,504.0 91.6,504.1 94.3,504.2 97.2,504.4 100.2,504.5 103.5,504.6 106.9,504.7 110.4,504.8 114.1,504.9 117.9,505.0 121.8,505.1 125.9,505.2 130.0,505.2 134.2,505.3 138.5,505.3 142.8,505.3 147.1,505.3 151.5,505.3 155.9,505.3 160.2,505.3 164.5,505.3 168.8,505.3 173.0,505.2 177.1,505.2 181.2,505.1 185.1,505.0 188.9,504.9 192.6,504.8 196.1,504.7 199.5,504.6 202.8,504.5 205.8,504.4 208.7,504.2 211.4,504.1 213.9,504.0 216.2,503.8 218.3,503.7 220.2,503.5 221.9,503.3 223.3,503.2 224.6,503.0 225.6,502.8 226.4,502.7 227.0,502.5 227.4,502.3" fill="none"/><polyline points="70.4,488.4 70.5,488.5 70.9,488.6 71.5,488.7 72.4,488.8 73.4,488.9 74.7,489.0 76.3,489.1 78.0,489.2 80.0,489.3 82.3,489.4 84.7,489.5 87.4,489.6 90.2,489.7 93.3,489.8 96.6,489.9 100.0,490.0 103.7,490.0 107.4,490.1 111.4,490.2 115.5,490.2 119.7,490.3 124.0,490.3 128.5,490.4 133.0,490.4 137.5,490.4 142.2,490.4 146.8,490.4 151.5,490.4 156.2,490.4 160.8,490.4 165.5,490.4 170.0,490.4 174.5,490.4 179.0,490.3 183.3,490.3 187.5,490.2 191.6,490.2 195.6,490.1 199.3,490.0 203.0,490.0 206.4,489.9 209.7,489.8 212.8,489.7 215.6,489.6 218.3,489.5 220.7,489.4 223.0,489.3 225.0,489.2 226.7,489.1 228.3,489.0 229.6,488.9 230.6,488.8 231.5,488.7 232.1,488.6 232.5,488.5 232.6,488.4" fill="none"/><polyline points="67.8,473.9 68.0,473.9 68.3,473.9 68.9,474.0 69.8,474.0 70.9,474.1 72.2,474.1 73.8,474.1 75.6,474.2 77.7,474.2 80.0,474.2 82.5,474.3 85.2,474.3 88.2,474.3 91.3,474.4 94.7,474.4 98.3,474.4 102.0,474.4 105.9,474.5 110.0,474.5 114.2,474.5 118.6,474.5 123.1,474.5 127.7,474.6 132.3,474.6 137.1,474.6 141.8,474.6 146.7,474.6 151.5,474.6 156.3,474.6 161.2,474.6 165.9,474.6 170.7,474.6 175.3,474.6 179.9,474.5 184.4,474.5 188.8,474.5 193.0,474.5 197.1,474.5 201.0,474.4 204.7,474.4 208.3,474.4 211.7,474.4 214.8,474.3 217.8,474.3 220.5,474.3 223.0,474.2 225.3,474.2 227.4,474.2 229.2,474.1 230.8,474.1 232.1,474.1 233.2,474.0 234.1,474.0 234.7,473.9 235.0,473.9 235.2,473.9" fill="none"/><polyline points="67.8,459.1 68.0,459.1 68.3,459.1 68.9,459.0 69.8,459.0 70.9,458.9 72.2,458.9 73.8,458.9 75.6,458.8 77.7,458.8 80.0,458.8 82.5,458.7 85.2,458.7 88.2,458.7 91.3,458.6 94.7,458.6 98.3,458.6 102.0,458.6 105.9,458.5 110.0,458.5 114.2,458.5 118.6,458.5 123.1,458.5 127.7,458.4 132.3,458.4 137.1,458.4 141.8,458.4 146.7,458.4 151.5,458.4 156.3,458.4 161.2,458.4 165.9,458.4 170.7,458.4 175.3,458.4 179.9,458.5 184.4,458.5 188.8,458.5 193.0,458.5 197.1,458.5 201.0,458.6 204.7,458.6 208.3,458.6 211.7,458.6 214.8,458.7 217.8,458.7 220.5,458.7 223.0,458.8 225.3,458.8 227.4,458.8 229.2,458.9 230.8,458.9 232.1,458.9 233.2,459.0 234.1,459.0 234.7,459.1 235.0,459.1 235.2,459.1" fill="none"/><polyline points="70.4,444.6 70.5,444.5 70.9,444.4 71.5,444.3 72.4,444.2 73.4,444.1 74.7,444.0 76.3,443.9 78.0,443.8 80.0,443.7 82.3,443.6 84.7,443.5 87.4,443.4 90.2,443.3 93.3,443.2 96.6,443.1 100.0,443.0 103.7,443.0 107.4,442.9 111.4,442.8 115.5,442.8 119.7,442.7 124.0,442.7 128.5,442.6 133.0,442.6 137.5,442.6 142.2,442.6 146.8,442.6 151.5,442.6 156.2,442.6 160.8,442.6 165.5,442.6 170.0,442.6 174.5,442.6 179.0,442.7 183.3,442.7 187.5,442.8 191.6,442.8 195.6,442.9 199.3,443.0 203.0,443.0 206.4,443.1 209.7,443.2 212.8,443.3 215.6,443.4 218.3,443.5 220.7,443.6 223.0,443.7 225.0,443.8 226.7,443.9 228.3,444.0 229.6,444.1 230.6,444.2 231.5,444.3 232.1,444.4 232.5,444.5 232.6,444.6" fill="none"/><polyline points="75.6,430.7 76.0,430.5 76.6,430.3 77.4,430.2 78.4,430.0 79.7,429.8 81.1,429.7 82.8,429.5 84.7,429.3 86.8,429.2 89.1,429.0 91.6,428.9 94.3,428.8 97.2,428.6 100.2,428.5 103.5,428.4 106.9,428.3 110.4,428.2 114.1,428.1 117.9,428.0 121.8,427.9 125.9,427.8 130.0,427.8 134.2,427.7 138.5,427.7 142.8,427.7 147.1,427.7 151.5,427.7 155.9,427.7 160.2,427.7 164.5,427.7 168.8,427.7 173.0,427.8 177.1,427.8 181.2,427.9 185.1,428.0 188.9,428.1 192.6,428.2 196.1,428.3 199.5,428.4 202.8,428.5 205.8,428.6 208.7,428.8 211.4,428.9 213.9,429.0 216.2,429.2 218.3,429.3 220.2,429.5 221.9,429.7 223.3,429.8 224.6,430.0 225.6,430.2 226.4,430.3 227.0,430.5 227.4,430.7" fill="none"/><polyline points="83.0,417.9 83.4,417.7 83.9,417.5 84.7,417.3 85.7,417.1 86.8,416.9 88.1,416.7 89.7,416.5 91.4,416.3 93.3,416.1 95.4,416.0 97.7,415.8 100.1,415.6 102.7,415.5 105.5,415.3 108.4,415.2 111.5,415.0 114.7,414.9 118.0,414.8 121.4,414.7 124.9,414.6 128.6,414.5 132.3,414.4 136.0,414.4 139.8,414.3 143.7,414.3 147.6,414.3 151.5,414.3 155.4,414.3 159.3,414.3 163.2,414.3 167.0,414.4 170.7,414.4 174.4,414.5 178.1,414.6 181.6,414.7 185.0,414.8 188.3,414.9 191.5,415.0 194.6,415.2 197.5,415.3 200.3,415.5 202.9,415.6 205.3,415.8 207.6,416.0 209.7,416.1 211.6,416.3 213.3,416.5 214.9,416.7 216.2,416.9 217.3,417.1 218.3,417.3 219.1,417.5 219.6,417.7 220.0,417.9" fill="none"/><polyline points="92.5,406.7 92.8,406.5 93.4,406.3 94.0,406.1 94.9,405.9 95.9,405.7 97.1,405.4 98.4,405.2 99.9,405.0 101.6,404.8 103.4,404.6 105.4,404.5 107.5,404.3 109.8,404.1 112.1,404.0 114.7,403.8 117.3,403.7 120.0,403.5 122.9,403.4 125.8,403.3 128.8,403.2 131.9,403.1 135.1,403.1 138.3,403.0 141.6,403.0 144.9,402.9 148.2,402.9 151.5,402.9 154.8,402.9 158.1,402.9 161.4,403.0 164.7,403.0 167.9,403.1 171.1,403.1 174.2,403.2 177.2,403.3 180.1,403.4 183.0,403.5 185.7,403.7 188.3,403.8 190.9,404.0 193.2,404.1 195.5,404.3 197.6,404.5 199.6,404.6 201.4,404.8 203.1,405.0 204.6,405.2 205.9,405.4 207.1,405.7 208.1,405.9 209.0,406.1 209.6,406.3 210.2,406.5 210.5,406.7" fill="none"/><polyline points="104.0,397.2 104.5,397.0 105.1,396.8 105.8,396.6 106.7,396.4 107.6,396.2 108.8,396.0 110.0,395.8 111.4,395.6 112.8,395.5 114.5,395.3 116.2,395.1 118.0,395.0 119.9,394.8 122.0,394.7 124.1,394.6 126.3,394.5 128.6,394.3 130.9,394.3 133.3,394.2 135.8,394.1 138.4,394.0 140.9,394.0 143.6,393.9 146.2,393.9 148.8,393.9 151.5,393.9 154.2,393.9 156.8,393.9 159.4,393.9 162.1,394.0 164.6,394.0 167.2,394.1 169.7,394.2 172.1,394.3 174.4,394.3 176.7,394.5 178.9,394.6 181.0,394.7 183.1,394.8 185.0,395.0 186.8,395.1 188.5,395.3 190.2,395.5 191.6,395.6 193.0,395.8 194.2,396.0 195.4,396.2 196.3,396.4 197.2,396.6 197.9,396.8 198.5,397.0 199.0,397.2" fill="none"/><polyline points="117.0,389.9 117.5,389.7 118.0,389.6 118.7,389.4 119.4,389.3 120.2,389.1 121.2,389.0 122.2,388.8 123.3,388.7 124.5,388.5 125.8,388.4 127.1,388.3 128.5,388.2 130.0,388.1 131.6,388.0 133.2,387.9 134.8,387.8 136.6,387.7 138.3,387.6 140.1,387.6 142.0,387.5 143.8,387.5 145.7,387.5 147.6,387.4 149.6,387.4 151.5,387.4 153.4,387.4 155.4,387.4 157.3,387.5 159.2,387.5 161.0,387.5 162.9,387.6 164.7,387.6 166.4,387.7 168.2,387.8 169.8,387.9 171.4,388.0 173.0,388.1 174.5,388.2 175.9,388.3 177.2,388.4 178.5,388.5 179.7,388.7 180.8,388.8 181.8,389.0 182.8,389.1 183.6,389.3 184.3,389.4 185.0,389.6 185.5,389.7 186.0,389.9" fill="none"/><polyline points="131.5,384.9 132.0,384.8 132.5,384.7 133.1,384.6 133.7,384.5 134.4,384.4 135.1,384.3 135.9,384.3 136.7,384.2 137.6,384.1 138.5,384.0 139.5,384.0 140.4,383.9 141.4,383.9 142.5,383.8 143.6,383.8 144.6,383.7 145.8,383.7 146.9,383.7 148.0,383.7 149.2,383.6 150.3,383.6 151.5,383.6 152.7,383.6 153.8,383.6 155.0,383.7 156.1,383.7 157.2,383.7 158.4,383.7 159.4,383.8 160.5,383.8 161.6,383.9 162.6,383.9 163.5,384.0 164.5,384.0 165.4,384.1 166.3,384.2 167.1,384.3 167.9,384.3 168.6,384.4 169.3,384.5 169.9,384.6 170.5,384.7 171.0,384.8 171.5,384.9" fill="none"/><polyline points="118.3,543.7 114.4,541.9 110.6,539.8 106.9,537.6 103.3,535.2 99.9,532.5 96.5,529.7 93.4,526.7 90.3,523.5 87.5,520.2 84.8,516.7 82.3,513.0 80.0,509.2 77.9,505.3 76.0,501.3 74.3,497.2 72.8,493.0 71.5,488.7 70.5,484.3 69.7,479.9 69.1,475.5 68.7,471.0 68.6,466.5 68.7,462.0 69.1,457.5 69.7,453.1 70.5,448.7 71.5,444.3 72.8,440.0 74.3,435.8 76.0,431.7 77.9,427.7 80.0,423.8 82.3,420.0 84.8,416.3 87.5,412.8 90.3,409.5 93.4,406.3 96.5,403.3 99.9,400.5 103.3,397.8 106.9,395.4 110.6,393.2 114.4,391.1 118.3,389.3" fill="none"/><polyline points="131.7,548.1 127.8,547.0 123.9,545.7 120.2,544.2 116.4,542.4 112.8,540.4 109.3,538.2 105.8,535.8 102.5,533.2 99.3,530.4 96.3,527.4 93.4,524.2 90.6,520.9 88.0,517.4 85.6,513.7 83.4,509.9 81.4,505.9 79.5,501.9 77.9,497.7 76.4,493.4 75.2,489.1 74.2,484.6 73.4,480.1 72.9,475.6 72.5,471.1 72.4,466.5 72.5,461.9 72.9,457.4 73.4,452.9 74.2,448.4 75.2,443.9 76.4,439.6 77.9,435.3 79.5,431.1 81.4,427.1 83.4,423.1 85.6,419.3 88.0,415.6 90.6,412.1 93.4,408.8 96.3,405.6 99.3,402.6 102.5,399.8 105.8,397.2 109.3,394.8 112.8,392.6 116.4,390.6 120.2,388.8 123.9,387.3 127.8,386.0 131.7,384.9" fill="none"/><polyline points="137.1,549.2 133.5,548.4 130.0,547.4 126.4,546.2 123.0,544.7 119.6,543.0 116.3,541.0 113.0,538.9 109.9,536.5 106.8,533.9 103.9,531.1 101.0,528.1 98.4,524.9 95.8,521.6 93.4,518.0 91.2,514.3 89.1,510.5 87.2,506.5 85.5,502.4 84.0,498.1 82.6,493.8 81.5,489.4 80.6,484.9 79.8,480.4 79.3,475.8 79.0,471.1 78.9,466.5 79.0,461.9 79.3,457.2 79.8,452.6 80.6,448.1 81.5,443.6 82.6,439.2 84.0,434.9 85.5,430.6 87.2,426.5 89.1,422.5 91.2,418.7 93.4,415.0 95.8,411.4 98.4,408.1 101.0,404.9 103.9,401.9 106.8,399.1 109.9,396.5 113.0,394.1 116.3,392.0 119.6,390.0 123.0,388.3 126.4,386.8 130.0,385.6 133.5,384.6 137.1,383.8" fill="none"/><polyline points="142.2,550.0 139.0,549.5 135.9,548.7 132.8,547.8 129.8,546.6 126.8,545.1 123.8,543.4 120.9,541.5 118.0,539.4 115.3,537.0 112.6,534.5 110.0,531.7 107.5,528.7 105.1,525.5 102.9,522.2 100.8,518.6 98.8,514.9 97.0,511.0 95.3,507.0 93.8,502.8 92.4,498.6 91.2,494.2 90.2,489.7 89.4,485.2 88.7,480.6 88.3,475.9 88.0,471.2 87.9,466.5 88.0,461.8 88.3,457.1 88.7,452.4 89.4,447.8 90.2,443.3 91.2,438.8 92.4,434.4 93.8,430.2 95.3,426.0 97.0,422.0 98.8,418.1 100.8,414.4 102.9,410.8 105.1,407.5 107.5,404.3 110.0,401.3 112.6,398.5 115.3,396.0 118.0,393.6 120.9,391.5 123.8,389.6 126.8,387.9 129.8,386.4 132.8,385.2 135.9,384.3 139.0,383.5 142.2,383.0" fill="none"/><polyline points="143.9,550.1 141.4,549.7 138.8,549.0 136.3,548.1 133.8,546.9 131.3,545.5 128.9,543.8 126.5,542.0 124.2,539.9 121.9,537.5 119.7,535.0 117.6,532.2 115.5,529.2 113.6,526.1 111.7,522.7 110.0,519.1 108.3,515.4 106.8,511.5 105.4,507.4 104.2,503.2 103.0,498.9 102.1,494.5 101.2,490.0 100.5,485.4 100.0,480.7 99.6,476.0 99.4,471.3 99.3,466.5 99.4,461.7 99.6,457.0 100.0,452.3 100.5,447.6 101.2,443.0 102.1,438.5 103.0,434.1 104.2,429.8 105.4,425.6 106.8,421.5 108.3,417.6 110.0,413.9 111.7,410.3 113.6,406.9 115.5,403.8 117.6,400.8 119.7,398.0 121.9,395.5 124.2,393.1 126.5,391.0 128.9,389.2 131.3,387.5 133.8,386.1 136.3,384.9 138.8,384.0 141.4,383.3 143.9,382.9" fill="none"/><polyline points="145.9,550.2 144.0,549.8 142.1,549.2 140.3,548.3 138.4,547.1 136.6,545.8 134.8,544.2 133.0,542.3 131.3,540.2 129.6,537.9 127.9,535.4 126.3,532.6 124.8,529.6 123.4,526.5 122.0,523.1 120.7,519.5 119.4,515.8 118.3,511.8 117.3,507.8 116.3,503.6 115.5,499.2 114.7,494.8 114.1,490.2 113.6,485.6 113.2,480.9 112.9,476.1 112.7,471.3 112.7,466.5 112.7,461.7 112.9,456.9 113.2,452.1 113.6,447.4 114.1,442.8 114.7,438.2 115.5,433.8 116.3,429.4 117.3,425.2 118.3,421.2 119.4,417.2 120.7,413.5 122.0,409.9 123.4,406.5 124.8,403.4 126.3,400.4 127.9,397.6 129.6,395.1 131.3,392.8 133.0,390.7 134.8,388.8 136.6,387.2 138.4,385.9 140.3,384.7 142.1,383.8 144.0,383.2 145.9,382.8" fill="none"/><polyline points="149.2,550.5 148.1,550.3 146.9,549.9 145.8,549.3 144.6,548.4 143.5,547.3 142.3,546.0 141.2,544.4 140.1,542.6 139.1,540.5 138.0,538.2 137.0,535.7 136.0,532.9 135.1,529.9 134.2,526.8 133.3,523.4 132.5,519.8 131.8,516.0 131.1,512.1 130.4,508.0 129.8,503.8 129.3,499.4 128.8,494.9 128.5,490.4 128.1,485.7 127.9,481.0 127.7,476.2 127.6,471.3 127.6,466.5 127.6,461.7 127.7,456.8 127.9,452.0 128.1,447.3 128.5,442.6 128.8,438.1 129.3,433.6 129.8,429.2 130.4,425.0 131.1,420.9 131.8,417.0 132.5,413.2 133.3,409.6 134.2,406.2 135.1,403.1 136.0,400.1 137.0,397.3 138.0,394.8 139.1,392.5 140.1,390.4 141.2,388.6 142.3,387.0 143.5,385.7 144.6,384.6 145.8,383.7 146.9,383.1 148.1,382.7 149.2,382.5" fill="none"/><polyline points="150.7,550.5 150.3,550.4 150.0,550.0 149.6,549.4 149.2,548.5 148.8,547.4 148.4,546.1 148.0,544.5 147.7,542.7 147.3,540.6 147.0,538.3 146.6,535.8 146.3,533.0 146.0,530.1 145.7,526.9 145.4,523.5 145.1,519.9 144.8,516.2 144.6,512.2 144.4,508.1 144.2,503.9 144.0,499.5 143.8,495.0 143.7,490.4 143.6,485.8 143.5,481.0 143.5,476.2 143.4,471.4 143.4,466.5 143.4,461.6 143.5,456.8 143.5,452.0 143.6,447.2 143.7,442.6 143.8,438.0 144.0,433.5 144.2,429.1 144.4,424.9 144.6,420.8 144.8,416.8 145.1,413.1 145.4,409.5 145.7,406.1 146.0,402.9 146.3,400.0 146.6,397.2 147.0,394.7 147.3,392.4 147.7,390.3 148.0,388.5 148.4,386.9 148.8,385.6 149.2,384.5 149.6,383.6 150.0,383.0 150.3,382.6 150.7,382.5" fill="none"/><polyline points="152.3,550.5 152.7,550.4 153.0,550.0 153.4,549.4 153.8,548.5 154.2,547.4 154.6,546.1 155.0,544.5 155.3,542.7 155.7,540.6 156.0,538.3 156.4,535.8 156.7,533.0 157.0,530.1 157.3,526.9 157.6,523.5 157.9,519.9 158.2,516.2 158.4,512.2 158.6,508.1 158.8,503.9 159.0,499.5 159.2,495.0 159.3,490.4 159.4,485.8 159.5,481.0 159.5,476.2 159.6,471.4 159.6,466.5 159.6,461.6 159.5,456.8 159.5,452.0 159.4,447.2 159.3,442.6 159.2,438.0 159.0,433.5 158.8,429.1 158.6,424.9 158.4,420.8 158.2,416.8 157.9,413.1 157.6,409.5 157.3,406.1 157.0,402.9 156.7,400.0 156.4,397.2 156.0,394.7 155.7,392.4 155.3,390.3 155.0,388.5 154.6,386.9 154.2,385.6 153.8,384.5 153.4,383.6 153.0,383.0 152.7,382.6 152.3,382.5" fill="none"/><polyline points="153.8,550.5 154.9,550.3 156.1,549.9 157.2,549.3 158.4,548.4 159.5,547.3 160.7,546.0 161.8,544.4 162.9,542.6 163.9,540.5 165.0,538.2 166.0,535.7 167.0,532.9 167.9,529.9 168.8,526.8 169.7,523.4 170.5,519.8 171.2,516.0 171.9,512.1 172.6,508.0 173.2,503.8 173.7,499.4 174.2,494.9 174.5,490.4 174.9,485.7 175.1,481.0 175.3,476.2 175.4,471.3 175.4,466.5 175.4,461.7 175.3,456.8 175.1,452.0 174.9,447.3 174.5,442.6 174.2,438.1 173.7,433.6 173.2,429.2 172.6,425.0 171.9,420.9 171.2,417.0 170.5,413.2 169.7,409.6 168.8,406.2 167.9,403.1 167.0,400.1 166.0,397.3 165.0,394.8 163.9,392.5 162.9,390.4 161.8,388.6 160.7,387.0 159.5,385.7 158.4,384.6 157.2,383.7 156.1,383.1 154.9,382.7 153.8,382.5" fill="none"/><polyline points="157.1,550.2 159.0,549.8 160.9,549.2 162.7,548.3 164.6,547.1 166.4,545.8 168.2,544.2 170.0,542.3 171.7,540.2 173.4,537.9 175.1,535.4 176.7,532.6 178.2,529.6 179.6,526.5 181.0,523.1 182.3,519.5 183.6,515.8 184.7,511.8 185.7,507.8 186.7,503.6 187.5,499.2 188.3,494.8 188.9,490.2 189.4,485.6 189.8,480.9 190.1,476.1 190.3,471.3 190.3,466.5 190.3,461.7 190.1,456.9 189.8,452.1 189.4,447.4 188.9,442.8 188.3,438.2 187.5,433.8 186.7,429.4 185.7,425.2 184.7,421.2 183.6,417.2 182.3,413.5 181.0,409.9 179.6,406.5 178.2,403.4 176.7,400.4 175.1,397.6 173.4,395.1 171.7,392.8 170.0,390.7 168.2,388.8 166.4,387.2 164.6,385.9 162.7,384.7 160.9,383.8 159.0,383.2 157.1,382.8" fill="none"/><polyline points="159.1,550.1 161.6,549.7 164.2,549.0 166.7,548.1 169.2,546.9 171.7,545.5 174.1,543.8 176.5,542.0 178.8,539.9 181.1,537.5 183.3,535.0 185.4,532.2 187.5,529.2 189.4,526.1 191.3,522.7 193.0,519.1 194.7,515.4 196.2,511.5 197.6,507.4 198.8,503.2 200.0,498.9 200.9,494.5 201.8,490.0 202.5,485.4 203.0,480.7 203.4,476.0 203.6,471.3 203.7,466.5 203.6,461.7 203.4,457.0 203.0,452.3 202.5,447.6 201.8,443.0 200.9,438.5 200.0,434.1 198.8,429.8 197.6,425.6 196.2,421.5 194.7,417.6 193.0,413.9 191.3,410.3 189.4,406.9 187.5,403.8 185.4,400.8 183.3,398.0 181.1,395.5 178.8,393.1 176.5,391.0 174.1,389.2 171.7,387.5 169.2,386.1 166.7,384.9 164.2,384.0 161.6,383.3 159.1,382.9" fill="none"/><polyline points="160.8,550.0 164.0,549.5 167.1,548.7 170.2,547.8 173.2,546.6 176.2,545.1 179.2,543.4 182.1,541.5 185.0,539.4 187.7,537.0 190.4,534.5 193.0,531.7 195.5,528.7 197.9,525.5 200.1,522.2 202.2,518.6 204.2,514.9 206.0,511.0 207.7,507.0 209.2,502.8 210.6,498.6 211.8,494.2 212.8,489.7 213.6,485.2 214.3,480.6 214.7,475.9 215.0,471.2 215.1,466.5 215.0,461.8 214.7,457.1 214.3,452.4 213.6,447.8 212.8,443.3 211.8,438.8 210.6,434.4 209.2,430.2 207.7,426.0 206.0,422.0 204.2,418.1 202.2,414.4 200.1,410.8 197.9,407.5 195.5,404.3 193.0,401.3 190.4,398.5 187.7,396.0 185.0,393.6 182.1,391.5 179.2,389.6 176.2,387.9 173.2,386.4 170.2,385.2 167.1,384.3 164.0,383.5 160.8,383.0" fill="none"/><polyline points="165.9,549.2 169.5,548.4 173.0,547.4 176.6,546.2 180.0,544.7 183.4,543.0 186.7,541.0 190.0,538.9 193.1,536.5 196.2,533.9 199.1,531.1 202.0,528.1 204.6,524.9 207.2,521.6 209.6,518.0 211.8,514.3 213.9,510.5 215.8,506.5 217.5,502.4 219.0,498.1 220.4,493.8 221.5,489.4 222.4,484.9 223.2,480.4 223.7,475.8 224.0,471.1 224.1,466.5 224.0,461.9 223.7,457.2 223.2,452.6 222.4,448.1 221.5,443.6 220.4,439.2 219.0,434.9 217.5,430.6 215.8,426.5 213.9,422.5 211.8,418.7 209.6,415.0 207.2,411.4 204.6,408.1 202.0,404.9 199.1,401.9 196.2,399.1 193.1,396.5 190.0,394.1 186.7,392.0 183.4,390.0 180.0,388.3 176.6,386.8 173.0,385.6 169.5,384.6 165.9,383.8" fill="none"/><polyline points="171.3,548.1 175.2,547.0 179.1,545.7 182.8,544.2 186.6,542.4 190.2,540.4 193.7,538.2 197.2,535.8 200.5,533.2 203.7,530.4 206.7,527.4 209.6,524.2 212.4,520.9 215.0,517.4 217.4,513.7 219.6,509.9 221.6,505.9 223.5,501.9 225.1,497.7 226.6,493.4 227.8,489.1 228.8,484.6 229.6,480.1 230.1,475.6 230.5,471.1 230.6,466.5 230.5,461.9 230.1,457.4 229.6,452.9 228.8,448.4 227.8,443.9 226.6,439.6 225.1,435.3 223.5,431.1 221.6,427.1 219.6,423.1 217.4,419.3 215.0,415.6 212.4,412.1 209.6,408.8 206.7,405.6 203.7,402.6 200.5,399.8 197.2,397.2 193.7,394.8 190.2,392.6 186.6,390.6 182.8,388.8 179.1,387.3 175.2,386.0 171.3,384.9" fill="none"/><polyline points="184.7,543.7 188.6,541.9 192.4,539.8 196.1,537.6 199.7,535.2 203.1,532.5 206.5,529.7 209.6,526.7 212.7,523.5 215.5,520.2 218.2,516.7 220.7,513.0 223.0,509.2 225.1,505.3 227.0,501.3 228.7,497.2 230.2,493.0 231.5,488.7 232.5,484.3 233.3,479.9 233.9,475.5 234.3,471.0 234.4,466.5 234.3,462.0 233.9,457.5 233.3,453.1 232.5,448.7 231.5,444.3 230.2,440.0 228.7,435.8 227.0,431.7 225.1,427.7 223.0,423.8 220.7,420.0 218.2,416.3 215.5,412.8 212.7,409.5 209.6,406.3 206.5,403.3 203.1,400.5 199.7,397.8 196.1,395.4 192.4,393.2 188.6,391.1 184.7,389.3" fill="none"/></g></svg>
<div class="a" style="left:302px;top:219px;width:5px;height:479px;background:#e6e6e6"></div>
<div class="a" style="left:307px;top:219px;width:878px;height:480px;background:#f0f0f0;border:1px solid #a0a0a0"></div>
<svg class="a" style="left:313px;top:312px" width="831" height="260" viewBox="313 312 831 260"><rect x="313" y="312" width="831" height="260" fill="#000"/><g id="photo"><defs><linearGradient id="skyv" x1="0" y1="316" x2="0" y2="432" gradientUnits="userSpaceOnUse"><stop offset="0" stop-color="#5e5f78"/><stop offset="0.25" stop-color="#7a80a0"/><stop offset="0.55" stop-color="#8e90ae"/><stop offset="0.72" stop-color="#928ca6"/><stop offset="0.86" stop-color="#8e7a8c"/><stop offset="1" stop-color="#8a6e7a"/></linearGradient><linearGradient id="skyh" x1="314" y1="0" x2="1140" y2="0" gradientUnits="userSpaceOnUse"><stop offset="0" stop-color="#2c3650" stop-opacity="0.55"/><stop offset="0.2" stop-color="#34405e" stop-opacity="0.35"/><stop offset="0.42" stop-color="#ffffff" stop-opacity="0.02"/><stop offset="0.55" stop-color="#d8dcf0" stop-opacity="0.18"/><stop offset="0.72" stop-color="#b0a0b8" stop-opacity="0.08"/><stop offset="0.88" stop-color="#6a5060" stop-opacity="0.22"/><stop offset="1" stop-color="#503848" stop-opacity="0.38"/></linearGradient><linearGradient id="skyb" x1="0" y1="316" x2="0" y2="432" gradientUnits="userSpaceOnUse"><stop offset="0" stop-color="#000" stop-opacity="0"/><stop offset="0.28" stop-color="#5a7eb0" stop-opacity="0"/><stop offset="0.4" stop-color="#5a7eb0" stop-opacity="0.45"/><stop offset="0.62" stop-color="#5a7eb0" stop-opacity="0.2"/><stop offset="0.8" stop-color="#5a7eb0" stop-opacity="0"/></linearGradient><linearGradient id="skybm" x1="314" y1="0" x2="700" y2="0" gradientUnits="userSpaceOnUse"><stop offset="0" stop-color="#fff"/><stop offset="0.5" stop-color="#aaa"/><stop offset="1" stop-color="#000"/></linearGradient><mask id="skybmask"><rect x="314" y="316" width="400" height="120" fill="url(#skybm)"/></mask><linearGradient id="mt" x1="0" y1="376" x2="0" y2="476" gradientUnits="userSpaceOnUse"><stop offset="0" stop-color="#a87480"/><stop offset="0.5" stop-color="#946276"/><stop offset="0.66" stop-color="#704a68"/><stop offset="0.77" stop-color="#3c3862"/><stop offset="0.88" stop-color="#262a52"/><stop offset="1" stop-color="#1c2244"/></linearGradient><linearGradient id="orx" x1="640" y1="0" x2="900" y2="0" gradientUnits="userSpaceOnUse"><stop offset="0" stop-color="#cc8450" stop-opacity="0"/><stop offset="0.18" stop-color="#cc8450" stop-opacity="0.8"/><stop offset="0.72" stop-color="#cc8450" stop-opacity="0.85"/><stop offset="1" stop-color="#cc8450" stop-opacity="0"/></linearGradient><linearGradient id="ory" x1="0" y1="376" x2="0" y2="470" gradientUnits="userSpaceOnUse"><stop offset="0" stop-color="#fff"/><stop offset="0.45" stop-color="#fff"/><stop offset="0.75" stop-color="#000"/></linearGradient><mask id="orm"><rect x="312" y="370" width="830" height="110" fill="url(#ory)"/></mask><linearGradient id="fld" x1="0" y1="484" x2="0" y2="550" gradientUnits="userSpaceOnUse"><stop offset="0" stop-color="#0f0e12"/><stop offset="0.5" stop-color="#121014"/><stop offset="1" stop-color="#1e1a1c"/></linearGradient><filter id="streak" x="312" y="316" width="830" height="115" filterUnits="userSpaceOnUse"><feTurbulence type="fractalNoise" baseFrequency="0.004 0.07" numOctaves="3" seed="4"/><feColorMatrix type="matrix" values="0 0 0 0 0.25  0 0 0 0 0.26  0 0 0 0 0.34  3.2 0 0 0 -1.35"/></filter><filter id="streakL" x="312" y="316" width="830" height="115" filterUnits="userSpaceOnUse"><feTurbulence type="fractalNoise" baseFrequency="0.005 0.06" numOctaves="3" seed="11"/><feColorMatrix type="matrix" values="0 0 0 0 0.85  0 0 0 0 0.86  0 0 0 0 0.92  3.0 0 0 0 -1.45"/></filter><filter id="rock" x="312" y="370" width="830" height="110" filterUnits="userSpaceOnUse"><feTurbulence type="fractalNoise" baseFrequency="0.16 0.05" numOctaves="3" seed="2"/><feColorMatrix type="matrix" values="0 0 0 0 0.12  0 0 0 0 0.08  0 0 0 0 0.16  3.5 0 0 0 -1.45"/></filter><filter id="rockL" x="312" y="370" width="830" height="110" filterUnits="userSpaceOnUse"><feTurbulence type="fractalNoise" baseFrequency="0.25 0.18" numOctaves="2" seed="8"/><feColorMatrix type="matrix" values="0 0 0 0 0.95  0 0 0 0 0.82  0 0 0 0 0.8  3.0 0 0 0 -1.6"/></filter><filter id="brush" x="312" y="484" width="830" height="66" filterUnits="userSpaceOnUse"><feTurbulence type="fractalNoise" baseFrequency="0.3 0.2" numOctaves="3" seed="5"/><feColorMatrix type="matrix" values="0 0 0 0 0.45  0 0 0 0 0.4  0 0 0 0 0.42  3.2 0 0 0 -1.45"/></filter><linearGradient id="brm" x1="0" y1="484" x2="0" y2="550" gradientUnits="userSpaceOnUse"><stop offset="0" stop-color="#222"/><stop offset="0.4" stop-color="#666"/><stop offset="1" stop-color="#bbb"/></linearGradient><mask id="brmask"><rect x="312" y="484" width="830" height="66" fill="url(#brm)"/></mask><filter id="crev" x="312" y="370" width="830" height="110" filterUnits="userSpaceOnUse"><feTurbulence type="turbulence" baseFrequency="0.07 0.03" numOctaves="3" seed="21"/><feColorMatrix type="matrix" values="0 0 0 0 0.2  0 0 0 0 0.1  0 0 0 0 0.18  -5 0 0 0 1.35"/></filter><linearGradient id="crm" x1="0" y1="376" x2="0" y2="470" gradientUnits="userSpaceOnUse"><stop offset="0" stop-color="#fff"/><stop offset="0.6" stop-color="#bbb"/><stop offset="1" stop-color="#222"/></linearGradient><mask id="crmask"><rect x="312" y="370" width="830" height="110" fill="url(#crm)"/></mask><linearGradient id="rkm" x1="0" y1="376" x2="0" y2="476" gradientUnits="userSpaceOnUse"><stop offset="0" stop-color="#fff"/><stop offset="0.6" stop-color="#fff"/><stop offset="0.85" stop-color="#555"/><stop offset="1" stop-color="#111"/></linearGradient><mask id="rkmask"><rect x="312" y="370" width="830" height="110" fill="url(#rkm)"/></mask><linearGradient id="warm" x1="800" y1="0" x2="1140" y2="0" gradientUnits="userSpaceOnUse"><stop offset="0" stop-color="#8a6a78" stop-opacity="0"/><stop offset="0.4" stop-color="#8a6a78" stop-opacity="0.3"/><stop offset="1" stop-color="#7a5a68" stop-opacity="0.35"/></linearGradient><filter id="soft" x="-1" y="-1" width="3" height="3"><feGaussianBlur stdDeviation="2.5"/></filter><filter id="soft1" x="-1" y="-1" width="3" height="3"><feGaussianBlur stdDeviation="0.9"/></filter><clipPath id="mclip"><polygon points="312.0,429.3 314.5,428.9 317.0,427.2 319.5,426.5 322.0,425.3 324.5,423.6 327.0,423.1 329.5,424.9 332.0,422.6 334.5,421.6 337.0,422.7 339.5,420.5 342.0,420.7 344.5,419.1 347.0,419.8 349.5,419.0 352.0,421.4 354.5,423.2 357.0,423.3 359.5,424.5 362.0,424.9 364.5,424.0 367.0,426.4 369.5,426.6 372.0,426.5 374.5,425.2 377.0,426.7 379.5,425.1 382.0,425.1 384.5,424.9 387.0,423.8 389.5,423.7 392.0,421.7 394.5,422.2 397.0,421.0 399.5,422.6 402.0,422.8 404.5,421.5 407.0,422.4 409.5,423.4 412.0,426.2 414.5,424.5 417.0,424.7 419.5,423.5 422.0,423.4 424.5,422.4 427.0,421.5 429.5,421.4 432.0,420.8 434.5,421.2 437.0,420.1 439.5,420.2 442.0,419.4 444.5,419.0 447.0,417.4 449.5,415.6 452.0,416.9 454.5,416.4 457.0,415.4 459.5,413.4 462.0,412.6 464.5,412.5 467.0,415.4 469.5,415.6 472.0,415.6 474.5,415.7 477.0,416.6 479.5,415.3 482.0,411.4 484.5,412.0 487.0,409.8 489.5,407.1 492.0,405.5 494.5,405.4 497.0,406.2 499.5,405.1 502.0,407.8 504.5,407.7 507.0,410.9 509.5,411.3 512.0,414.7 514.5,417.0 517.0,417.7 519.5,420.6 522.0,420.5 524.5,421.0 527.0,423.4 529.5,422.9 532.0,423.7 534.5,424.7 537.0,423.7 539.5,420.5 542.0,418.3 544.5,418.6 547.0,415.5 549.5,415.5 552.0,414.0 554.5,411.4 557.0,410.6 559.5,410.4 562.0,412.2 564.5,413.6 567.0,415.2 569.5,417.0 572.0,419.1 574.5,419.3 577.0,421.0 579.5,424.8 582.0,423.9 584.5,423.8 587.0,425.3 589.5,423.8 592.0,423.6 594.5,421.9 597.0,422.5 599.5,422.1 602.0,419.9 604.5,420.7 607.0,420.0 609.5,417.7 612.0,418.5 614.5,416.5 617.0,415.3 619.5,412.7 622.0,411.9 624.5,410.3 627.0,406.8 629.5,405.5 632.0,405.7 634.5,405.0 637.0,401.7 639.5,402.3 642.0,403.8 644.5,404.2 647.0,405.4 649.5,406.3 652.0,407.3 654.5,408.8 657.0,409.0 659.5,410.1 662.0,411.6 664.5,409.5 667.0,410.7 669.5,411.0 672.0,409.7 674.5,409.2 677.0,409.1 679.5,406.0 682.0,404.2 684.5,403.2 687.0,400.2 689.5,394.5 692.0,393.0 694.5,392.6 697.0,393.5 699.5,392.7 702.0,395.3 704.5,395.0 707.0,396.1 709.5,397.2 712.0,398.0 714.5,397.1 717.0,396.8 719.5,396.7 722.0,397.4 724.5,395.7 727.0,396.6 729.5,395.9 732.0,393.4 734.5,392.2 737.0,390.3 739.5,386.6 742.0,383.8 744.5,380.9 747.0,378.7 749.5,378.0 752.0,378.5 754.5,376.4 757.0,378.9 759.5,383.2 762.0,386.2 764.5,387.8 767.0,390.8 769.5,390.0 772.0,389.3 774.5,391.5 777.0,391.0 779.5,391.0 782.0,389.0 784.5,389.7 787.0,389.0 789.5,386.5 792.0,387.6 794.5,387.9 797.0,387.4 799.5,387.0 802.0,386.5 804.5,387.0 807.0,388.5 809.5,390.0 812.0,393.2 814.5,394.2 817.0,398.4 819.5,399.4 822.0,404.6 824.5,405.5 827.0,406.9 829.5,407.6 832.0,408.3 834.5,408.3 837.0,407.8 839.5,411.2 842.0,411.2 844.5,413.0 847.0,415.4 849.5,416.6 852.0,417.3 854.5,419.6 857.0,419.7 859.5,419.9 862.0,420.6 864.5,423.2 867.0,423.1 869.5,424.8 872.0,424.6 874.5,424.7 877.0,426.2 879.5,427.5 882.0,426.4 884.5,428.6 887.0,429.6 889.5,429.8 892.0,430.5 894.5,428.9 897.0,431.1 899.5,432.3 902.0,432.7 904.5,432.9 907.0,430.4 909.5,427.6 912.0,423.8 914.5,422.3 917.0,421.4 919.5,418.3 922.0,417.7 924.5,417.2 927.0,416.5 929.5,415.8 932.0,417.5 934.5,416.4 937.0,413.4 939.5,413.6 942.0,412.2 944.5,411.4 947.0,410.6 949.5,410.5 952.0,409.7 954.5,408.5 957.0,407.4 959.5,407.2 962.0,406.0 964.5,406.5 967.0,406.3 969.5,404.9 972.0,403.6 974.5,403.3 977.0,403.3 979.5,403.4 982.0,403.3 984.5,401.8 987.0,402.6 989.5,401.9 992.0,401.1 994.5,400.7 997.0,400.8 999.5,401.1 1002.0,400.1 1004.5,400.6 1007.0,399.4 1009.5,398.2 1012.0,398.3 1014.5,398.3 1017.0,396.4 1019.5,397.0 1022.0,397.0 1024.5,398.5 1027.0,399.0 1029.5,398.2 1032.0,400.5 1034.5,401.2 1037.0,400.6 1039.5,401.6 1042.0,401.2 1044.5,403.5 1047.0,403.5 1049.5,404.4 1052.0,404.4 1054.5,404.4 1057.0,404.9 1059.5,404.7 1062.0,403.8 1064.5,405.6 1067.0,404.7 1069.5,405.7 1072.0,407.8 1074.5,406.3 1077.0,406.7 1079.5,407.1 1082.0,409.7 1084.5,408.5 1087.0,408.8 1089.5,411.2 1092.0,409.6 1094.5,411.8 1097.0,412.0 1099.5,413.0 1102.0,413.9 1104.5,413.6 1107.0,414.8 1109.5,413.4 1112.0,416.0 1114.5,416.0 1117.0,417.3 1119.5,416.6 1122.0,419.4 1124.5,420.9 1127.0,419.9 1129.5,421.8 1132.0,423.7 1134.5,425.9 1137.0,426.0 1139.5,427.5 1142.0,429.3 1142.0,476.0 312.0,476.0"/></clipPath></defs><rect x="314" y="316" width="826" height="160" fill="url(#skyv)"/><rect x="314" y="316" width="826" height="160" fill="url(#skyh)"/><rect x="314" y="316" width="400" height="120" fill="url(#skyb)" mask="url(#skybmask)"/><rect x="800" y="316" width="340" height="120" fill="url(#warm)"/><rect x="314" y="316" width="826" height="115" filter="url(#streak)" opacity="0.55"/><rect x="314" y="316" width="826" height="115" filter="url(#streakL)" opacity="0.35"/><polygon points="312.0,429.3 314.5,428.9 317.0,427.2 319.5,426.5 322.0,425.3 324.5,423.6 327.0,423.1 329.5,424.9 332.0,422.6 334.5,421.6 337.0,422.7 339.5,420.5 342.0,420.7 344.5,419.1 347.0,419.8 349.5,419.0 352.0,421.4 354.5,423.2 357.0,423.3 359.5,424.5 362.0,424.9 364.5,424.0 367.0,426.4 369.5,426.6 372.0,426.5 374.5,425.2 377.0,426.7 379.5,425.1 382.0,425.1 384.5,424.9 387.0,423.8 389.5,423.7 392.0,421.7 394.5,422.2 397.0,421.0 399.5,422.6 402.0,422.8 404.5,421.5 407.0,422.4 409.5,423.4 412.0,426.2 414.5,424.5 417.0,424.7 419.5,423.5 422.0,423.4 424.5,422.4 427.0,421.5 429.5,421.4 432.0,420.8 434.5,421.2 437.0,420.1 439.5,420.2 442.0,419.4 444.5,419.0 447.0,417.4 449.5,415.6 452.0,416.9 454.5,416.4 457.0,415.4 459.5,413.4 462.0,412.6 464.5,412.5 467.0,415.4 469.5,415.6 472.0,415.6 474.5,415.7 477.0,416.6 479.5,415.3 482.0,411.4 484.5,412.0 487.0,409.8 489.5,407.1 492.0,405.5 494.5,405.4 497.0,406.2 499.5,405.1 502.0,407.8 504.5,407.7 507.0,410.9 509.5,411.3 512.0,414.7 514.5,417.0 517.0,417.7 519.5,420.6 522.0,420.5 524.5,421.0 527.0,423.4 529.5,422.9 532.0,423.7 534.5,424.7 537.0,423.7 539.5,420.5 542.0,418.3 544.5,418.6 547.0,415.5 549.5,415.5 552.0,414.0 554.5,411.4 557.0,410.6 559.5,410.4 562.0,412.2 564.5,413.6 567.0,415.2 569.5,417.0 572.0,419.1 574.5,419.3 577.0,421.0 579.5,424.8 582.0,423.9 584.5,423.8 587.0,425.3 589.5,423.8 592.0,423.6 594.5,421.9 597.0,422.5 599.5,422.1 602.0,419.9 604.5,420.7 607.0,420.0 609.5,417.7 612.0,418.5 614.5,416.5 617.0,415.3 619.5,412.7 622.0,411.9 624.5,410.3 627.0,406.8 629.5,405.5 632.0,405.7 634.5,405.0 637.0,401.7 639.5,402.3 642.0,403.8 644.5,404.2 647.0,405.4 649.5,406.3 652.0,407.3 654.5,408.8 657.0,409.0 659.5,410.1 662.0,411.6 664.5,409.5 667.0,410.7 669.5,411.0 672.0,409.7 674.5,409.2 677.0,409.1 679.5,406.0 682.0,404.2 684.5,403.2 687.0,400.2 689.5,394.5 692.0,393.0 694.5,392.6 697.0,393.5 699.5,392.7 702.0,395.3 704.5,395.0 707.0,396.1 709.5,397.2 712.0,398.0 714.5,397.1 717.0,396.8 719.5,396.7 722.0,397.4 724.5,395.7 727.0,396.6 729.5,395.9 732.0,393.4 734.5,392.2 737.0,390.3 739.5,386.6 742.0,383.8 744.5,380.9 747.0,378.7 749.5,378.0 752.0,378.5 754.5,376.4 757.0,378.9 759.5,383.2 762.0,386.2 764.5,387.8 767.0,390.8 769.5,390.0 772.0,389.3 774.5,391.5 777.0,391.0 779.5,391.0 782.0,389.0 784.5,389.7 787.0,389.0 789.5,386.5 792.0,387.6 794.5,387.9 797.0,387.4 799.5,387.0 802.0,386.5 804.5,387.0 807.0,388.5 809.5,390.0 812.0,393.2 814.5,394.2 817.0,398.4 819.5,399.4 822.0,404.6 824.5,405.5 827.0,406.9 829.5,407.6 832.0,408.3 834.5,408.3 837.0,407.8 839.5,411.2 842.0,411.2 844.5,413.0 847.0,415.4 849.5,416.6 852.0,417.3 854.5,419.6 857.0,419.7 859.5,419.9 862.0,420.6 864.5,423.2 867.0,423.1 869.5,424.8 872.0,424.6 874.5,424.7 877.0,426.2 879.5,427.5 882.0,426.4 884.5,428.6 887.0,429.6 889.5,429.8 892.0,430.5 894.5,428.9 897.0,431.1 899.5,432.3 902.0,432.7 904.5,432.9 907.0,430.4 909.5,427.6 912.0,423.8 914.5,422.3 917.0,421.4 919.5,418.3 922.0,417.7 924.5,417.2 927.0,416.5 929.5,415.8 932.0,417.5 934.5,416.4 937.0,413.4 939.5,413.6 942.0,412.2 944.5,411.4 947.0,410.6 949.5,410.5 952.0,409.7 954.5,408.5 957.0,407.4 959.5,407.2 962.0,406.0 964.5,406.5 967.0,406.3 969.5,404.9 972.0,403.6 974.5,403.3 977.0,403.3 979.5,403.4 982.0,403.3 984.5,401.8 987.0,402.6 989.5,401.9 992.0,401.1 994.5,400.7 997.0,400.8 999.5,401.1 1002.0,400.1 1004.5,400.6 1007.0,399.4 1009.5,398.2 1012.0,398.3 1014.5,398.3 1017.0,396.4 1019.5,397.0 1022.0,397.0 1024.5,398.5 1027.0,399.0 1029.5,398.2 1032.0,400.5 1034.5,401.2 1037.0,400.6 1039.5,401.6 1042.0,401.2 1044.5,403.5 1047.0,403.5 1049.5,404.4 1052.0,404.4 1054.5,404.4 1057.0,404.9 1059.5,404.7 1062.0,403.8 1064.5,405.6 1067.0,404.7 1069.5,405.7 1072.0,407.8 1074.5,406.3 1077.0,406.7 1079.5,407.1 1082.0,409.7 1084.5,408.5 1087.0,408.8 1089.5,411.2 1092.0,409.6 1094.5,411.8 1097.0,412.0 1099.5,413.0 1102.0,413.9 1104.5,413.6 1107.0,414.8 1109.5,413.4 1112.0,416.0 1114.5,416.0 1117.0,417.3 1119.5,416.6 1122.0,419.4 1124.5,420.9 1127.0,419.9 1129.5,421.8 1132.0,423.7 1134.5,425.9 1137.0,426.0 1139.5,427.5 1142.0,429.3 1142.0,476.0 312.0,476.0" fill="url(#mt)"/><g clip-path="url(#mclip)"><rect x="640" y="370" width="260" height="110" fill="url(#orx)" mask="url(#orm)"/><path d="M648 404L660 410L668 430L655 436L645 420Z" fill="#2e2030" opacity="0.6" filter="url(#soft)"/><ellipse cx="595" cy="432" rx="14" ry="8" fill="#4a2c44" opacity="0.35" filter="url(#soft)"/><polygon points="731,403 734.5,404 733.5,427 729,426" fill="#f0dcc8" opacity="0.7" filter="url(#soft1)"/><polygon points="754,377 761,387 752,398 744,388" fill="#f4d0a8" opacity="0.45" filter="url(#soft1)"/><polygon points="697,392 703,397 698,404 692,398" fill="#f0c8a8" opacity="0.4" filter="url(#soft1)"/><polygon points="785,386 803,388 810,398 790,402" fill="#e8b890" opacity="0.3" filter="url(#soft1)"/><rect x="312" y="370" width="830" height="110" filter="url(#rock)" mask="url(#rkmask)" opacity="0.5"/><rect x="312" y="370" width="830" height="110" filter="url(#crev)" mask="url(#crmask)" opacity="0.75"/><rect x="312" y="370" width="830" height="70" filter="url(#rockL)" opacity="0.08"/></g><rect x="314" y="474" width="826" height="12" fill="#1c2038"/><rect x="314" y="479.5" width="826" height="4.5" fill="#4c4e6e" opacity="0.9"/><rect x="314" y="484" width="826" height="66" fill="url(#fld)"/><rect x="314" y="485" width="826" height="65" filter="url(#brush)" mask="url(#brmask)" opacity="0.3"/></g><rect x="658" y="311" width="487" height="20" fill="#000"/><rect x="1136" y="311" width="9" height="262" fill="#000"/><rect x="313" y="549" width="832" height="24" fill="#000"/><rect x="316.6" y="312" width="2.8" height="260" fill="#2fe6ee"/><rect x="390.4" y="312" width="2.8" height="260" fill="#2fe6ee"/><rect x="464.2" y="312" width="2.8" height="260" fill="#2fe6ee"/><rect x="538.0" y="312" width="2.8" height="260" fill="#2fe6ee"/><rect x="611.8" y="312" width="2.8" height="260" fill="#2fe6ee"/><rect x="685.6" y="312" width="2.8" height="260" fill="#2fe6ee"/><rect x="759.4" y="312" width="2.8" height="260" fill="#2fe6ee"/><rect x="833.2" y="312" width="2.8" height="260" fill="#2fe6ee"/><rect x="907.0" y="312" width="2.8" height="260" fill="#2fe6ee"/><rect x="980.8" y="312" width="2.8" height="260" fill="#2fe6ee"/><rect x="1054.6" y="312" width="2.8" height="260" fill="#2fe6ee"/><rect x="1128.4" y="312" width="2.8" height="260" fill="#2fe6ee"/><rect x="313" y="326.6" width="831" height="2.8" fill="#2fe6ee"/><rect x="313" y="401.9" width="831" height="2.8" fill="#2fe6ee"/><rect x="313" y="474.9" width="831" height="2.8" fill="#2fe6ee"/><rect x="313" y="549.9" width="831" height="2.8" fill="#2fe6ee"/><path fill="#000" fill-opacity="0.45" fill-rule="evenodd" d="M313 311H1145V573H313Z M320 334H1135V546H320Z"/><rect x="320.5" y="334.5" width="814" height="211" fill="none" stroke="#e8e8e8" stroke-width="1"/></svg>
<div class="a" style="left:316px;top:678px;width:826px;height:4px;background:#e7e7e7;border:1px solid #d6d6d6"></div><div class="a" style="left:1164px;top:228px;width:4px;height:426px;background:#e7e7e7;border:1px solid #d6d6d6"></div><svg class="a" style="left:0;top:0" width="1186" height="723"><rect x="332.0" y="693" width="1" height="3" fill="#b8b8b8"/><rect x="344.0" y="693" width="1" height="3" fill="#b8b8b8"/><rect x="355.0" y="693" width="1" height="3" fill="#b8b8b8"/><rect x="366.0" y="693" width="1" height="3" fill="#b8b8b8"/><rect x="378.0" y="693" width="1" height="3" fill="#b8b8b8"/><rect x="389.0" y="693" width="1" height="3" fill="#b8b8b8"/><rect x="400.0" y="693" width="1" height="3" fill="#b8b8b8"/><rect x="412.0" y="693" width="1" height="3" fill="#b8b8b8"/><rect x="423.0" y="693" width="1" height="3" fill="#b8b8b8"/><rect x="434.0" y="693" width="1" height="3" fill="#b8b8b8"/><rect x="446.0" y="693" width="1" height="3" fill="#b8b8b8"/><rect x="457.0" y="693" width="1" height="3" fill="#b8b8b8"/><rect x="468.0" y="693" width="1" height="3" fill="#b8b8b8"/><rect x="480.0" y="693" width="1" height="3" fill="#b8b8b8"/><rect x="491.0" y="693" width="1" height="3" fill="#b8b8b8"/><rect x="502.0" y="693" width="1" height="3" fill="#b8b8b8"/><rect x="514.0" y="693" width="1" height="3" fill="#b8b8b8"/><rect x="525.0" y="693" width="1" height="3" fill="#b8b8b8"/><rect x="536.0" y="693" width="1" height="3" fill="#b8b8b8"/><rect x="548.0" y="693" width="1" height="3" fill="#b8b8b8"/><rect x="559.0" y="693" width="1" height="3" fill="#b8b8b8"/><rect x="570.0" y="693" width="1" height="3" fill="#b8b8b8"/><rect x="582.0" y="693" width="1" height="3" fill="#b8b8b8"/><rect x="593.0" y="693" width="1" height="3" fill="#b8b8b8"/><rect x="604.0" y="693" width="1" height="3" fill="#b8b8b8"/><rect x="616.0" y="693" width="1" height="3" fill="#b8b8b8"/><rect x="627.0" y="693" width="1" height="3" fill="#b8b8b8"/><rect x="638.0" y="693" width="1" height="3" fill="#b8b8b8"/><rect x="650.0" y="693" width="1" height="3" fill="#b8b8b8"/><rect x="661.0" y="693" width="1" height="3" fill="#b8b8b8"/><rect x="672.0" y="693" width="1" height="3" fill="#b8b8b8"/><rect x="684.0" y="693" width="1" height="3" fill="#b8b8b8"/><rect x="695.0" y="693" width="1" height="3" fill="#b8b8b8"/><rect x="706.0" y="693" width="1" height="3" fill="#b8b8b8"/><rect x="718.0" y="693" width="1" height="3" fill="#b8b8b8"/><rect x="729.0" y="693" width="1" height="3" fill="#b8b8b8"/><rect x="740.0" y="693" width="1" height="3" fill="#b8b8b8"/><rect x="752.0" y="693" width="1" height="3" fill="#b8b8b8"/><rect x="763.0" y="693" width="1" height="3" fill="#b8b8b8"/><rect x="774.0" y="693" width="1" height="3" fill="#b8b8b8"/><rect x="786.0" y="693" width="1" height="3" fill="#b8b8b8"/><rect x="797.0" y="693" width="1" height="3" fill="#b8b8b8"/><rect x="808.0" y="693" width="1" height="3" fill="#b8b8b8"/><rect x="820.0" y="693" width="1" height="3" fill="#b8b8b8"/><rect x="831.0" y="693" width="1" height="3" fill="#b8b8b8"/><rect x="842.0" y="693" width="1" height="3" fill="#b8b8b8"/><rect x="854.0" y="693" width="1" height="3" fill="#b8b8b8"/><rect x="865.0" y="693" width="1" height="3" fill="#b8b8b8"/><rect x="877.0" y="693" width="1" height="3" fill="#b8b8b8"/><rect x="888.0" y="693" width="1" height="3" fill="#b8b8b8"/><rect x="899.0" y="693" width="1" height="3" fill="#b8b8b8"/><rect x="911.0" y="693" width="1" height="3" fill="#b8b8b8"/><rect x="922.0" y="693" width="1" height="3" fill="#b8b8b8"/><rect x="933.0" y="693" width="1" height="3" fill="#b8b8b8"/><rect x="945.0" y="693" width="1" height="3" fill="#b8b8b8"/><rect x="956.0" y="693" width="1" height="3" fill="#b8b8b8"/><rect x="967.0" y="693" width="1" height="3" fill="#b8b8b8"/><rect x="979.0" y="693" width="1" height="3" fill="#b8b8b8"/><rect x="990.0" y="693" width="1" height="3" fill="#b8b8b8"/><rect x="1001.0" y="693" width="1" height="3" fill="#b8b8b8"/><rect x="1013.0" y="693" width="1" height="3" fill="#b8b8b8"/><rect x="1024.0" y="693" width="1" height="3" fill="#b8b8b8"/><rect x="1035.0" y="693" width="1" height="3" fill="#b8b8b8"/><rect x="1047.0" y="693" width="1" height="3" fill="#b8b8b8"/><rect x="1058.0" y="693" width="1" height="3" fill="#b8b8b8"/><rect x="1069.0" y="693" width="1" height="3" fill="#b8b8b8"/><rect x="1081.0" y="693" width="1" height="3" fill="#b8b8b8"/><rect x="1092.0" y="693" width="1" height="3" fill="#b8b8b8"/><rect x="1103.0" y="693" width="1" height="3" fill="#b8b8b8"/><rect x="1115.0" y="693" width="1" height="3" fill="#b8b8b8"/><rect x="1126.0" y="693" width="1" height="3" fill="#b8b8b8"/><rect x="321" y="692" width="1" height="5" fill="#a0a0a0"/><rect x="1135" y="692" width="1" height="5" fill="#a0a0a0"/><path d="M543 671H554V685L548.5 690L543 685Z" fill="#0078d7"/><rect x="1179" y="233.0" width="3" height="1" fill="#b8b8b8"/><rect x="1179" y="244.0" width="3" height="1" fill="#b8b8b8"/><rect x="1179" y="256.0" width="3" height="1" fill="#b8b8b8"/><rect x="1179" y="268.0" width="3" height="1" fill="#b8b8b8"/><rect x="1179" y="279.0" width="3" height="1" fill="#b8b8b8"/><rect x="1179" y="291.0" width="3" height="1" fill="#b8b8b8"/><rect x="1179" y="303.0" width="3" height="1" fill="#b8b8b8"/><rect x="1179" y="314.0" width="3" height="1" fill="#b8b8b8"/><rect x="1179" y="326.0" width="3" height="1" fill="#b8b8b8"/><rect x="1179" y="337.0" width="3" height="1" fill="#b8b8b8"/><rect x="1179" y="349.0" width="3" height="1" fill="#b8b8b8"/><rect x="1179" y="361.0" width="3" height="1" fill="#b8b8b8"/><rect x="1179" y="372.0" width="3" height="1" fill="#b8b8b8"/><rect x="1179" y="384.0" width="3" height="1" fill="#b8b8b8"/><rect x="1179" y="396.0" width="3" height="1" fill="#b8b8b8"/><rect x="1179" y="407.0" width="3" height="1" fill="#b8b8b8"/><rect x="1179" y="419.0" width="3" height="1" fill="#b8b8b8"/><rect x="1179" y="431.0" width="3" height="1" fill="#b8b8b8"/><rect x="1179" y="442.0" width="3" height="1" fill="#b8b8b8"/><rect x="1179" y="454.0" width="3" height="1" fill="#b8b8b8"/><rect x="1179" y="465.0" width="3" height="1" fill="#b8b8b8"/><rect x="1179" y="477.0" width="3" height="1" fill="#b8b8b8"/><rect x="1179" y="489.0" width="3" height="1" fill="#b8b8b8"/><rect x="1179" y="500.0" width="3" height="1" fill="#b8b8b8"/><rect x="1179" y="512.0" width="3" height="1" fill="#b8b8b8"/><rect x="1179" y="524.0" width="3" height="1" fill="#b8b8b8"/><rect x="1179" y="535.0" width="3" height="1" fill="#b8b8b8"/><rect x="1179" y="547.0" width="3" height="1" fill="#b8b8b8"/><rect x="1179" y="558.0" width="3" height="1" fill="#b8b8b8"/><rect x="1179" y="570.0" width="3" height="1" fill="#b8b8b8"/><rect x="1179" y="582.0" width="3" height="1" fill="#b8b8b8"/><rect x="1179" y="593.0" width="3" height="1" fill="#b8b8b8"/><rect x="1179" y="605.0" width="3" height="1" fill="#b8b8b8"/><rect x="1179" y="617.0" width="3" height="1" fill="#b8b8b8"/><rect x="1179" y="628.0" width="3" height="1" fill="#b8b8b8"/><rect x="1179" y="640.0" width="3" height="1" fill="#b8b8b8"/><rect x="1179" y="649" width="4" height="1" fill="#a0a0a0"/><path d="M1157 298H1171L1176 303.5L1171 309H1157Z" fill="#0078d7"/></svg>
<div class="t" style="left:3.10px;top:706.13px;font-size:11.66px;line-height:11.66px;">Déplacer la souris sur les images ou les boutons des images pour les identifier.</div>
<div class="a" style="left:847px;top:701px;width:1px;height:20px;background:#d4d4d4"></div>
<div class="a" style="left:1006px;top:701px;width:1px;height:20px;background:#d4d4d4"></div>
<div class="t" style="left:1011.00px;top:706.77px;font-size:10.90px;line-height:10.90px;">101,0 x 31,0</div>
<svg class="a" style="left:1174px;top:710px" width="10" height="11" viewBox="0 0 10 11"><rect x="7" y="1" width="2" height="2" fill="#b8b8b8"/><rect x="7" y="4" width="2" height="2" fill="#b8b8b8"/><rect x="4" y="4" width="2" height="2" fill="#b8b8b8"/><rect x="7" y="7" width="2" height="2" fill="#b8b8b8"/><rect x="4" y="7" width="2" height="2" fill="#b8b8b8"/><rect x="1" y="7" width="2" height="2" fill="#b8b8b8"/></svg>
<div class="a" style="left:0;top:0;width:1186px;height:723px;border:1px solid #6e6e6e;z-index:50"></div>
</div>
</body></html>
